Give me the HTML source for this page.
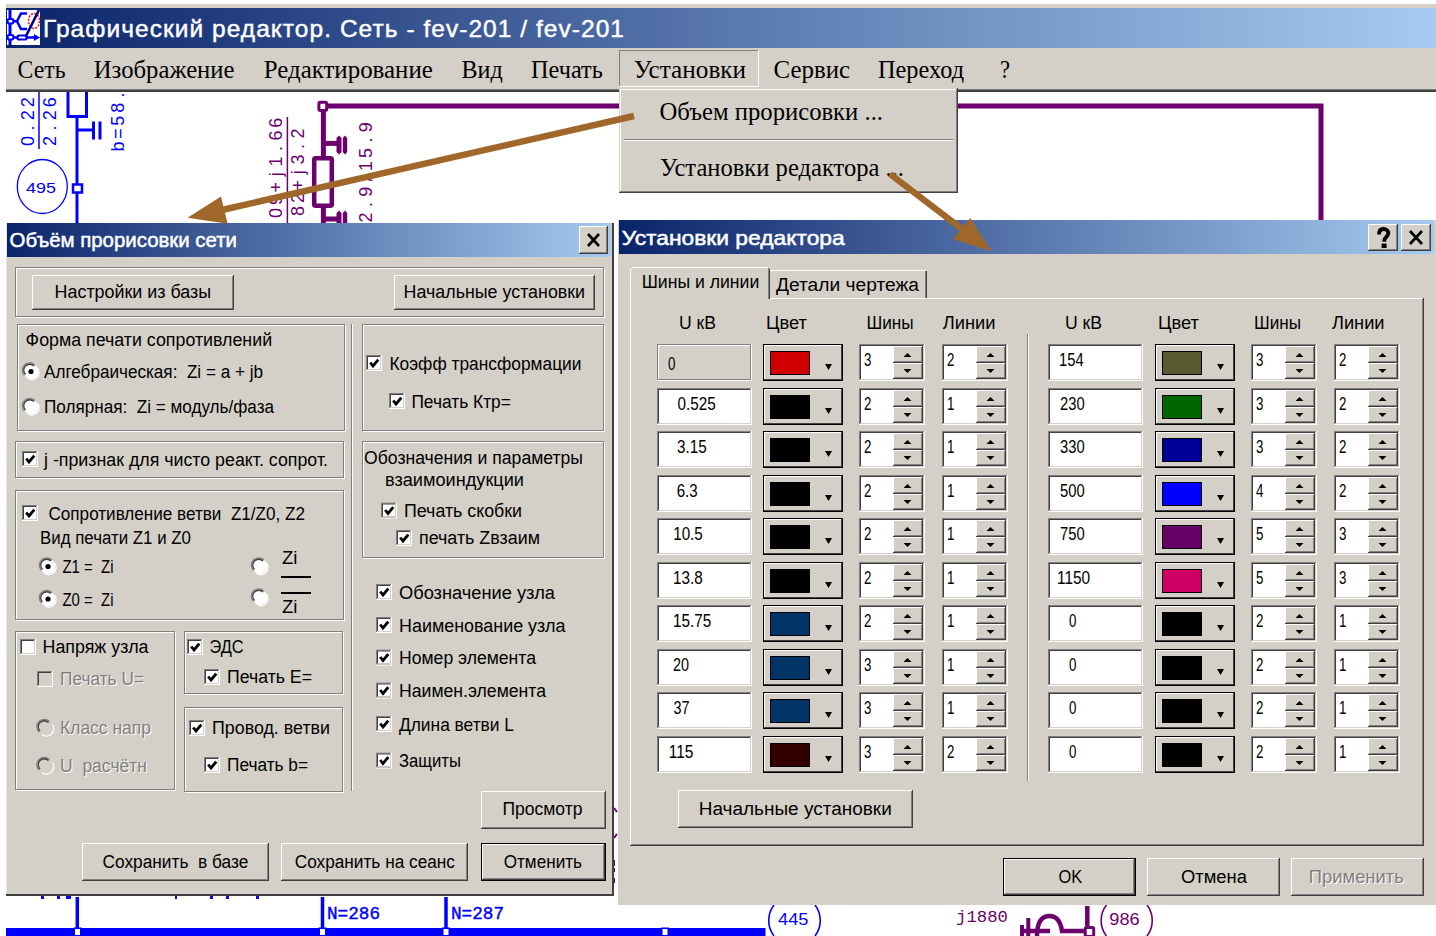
<!DOCTYPE html>
<html><head><meta charset="utf-8"><title>Графический редактор</title>
<style>html,body{margin:0;padding:0;background:#fff;overflow:hidden}svg{display:block}</style>
</head><body>
<svg width="1436" height="936" viewBox="0 0 1436 936">
<rect x="0" y="0" width="1436" height="936" fill="#fff"/>
<rect x="6" y="4" width="1430" height="4" fill="#d4d0c8"/>
<defs><linearGradient id="gmain" x1="0" x2="1" y1="0" y2="0"><stop offset="0" stop-color="#0a246a"/><stop offset="1" stop-color="#a6caf0"/></linearGradient></defs>
<rect x="6" y="8" width="1430" height="40" fill="url(#gmain)"/>
<rect x="7" y="10" width="33" height="35" fill="#fff"/>
<g stroke="#0000ff" fill="none" stroke-width="3"><path d="M10 10V45"/></g>
<g stroke="#0000ff" fill="#fff" stroke-width="2.2"><rect x="7.5" y="19" width="6" height="4.5" rx="2"/><rect x="7.5" y="35" width="6" height="4.5" rx="2"/><rect x="17.5" y="35.5" width="9" height="4" rx="1.5"/></g>
<g stroke="#0000ff" fill="none" stroke-width="2.5"><path d="M14 21.3H17M27 13.5H21L17 21.3L21 29H27"/><path d="M14 37.5H17M27 37.5H34"/></g>
<path d="M34 34L40 37.5L34 41Z" fill="#0000ff"/>
<ellipse cx="34" cy="21" rx="5.5" ry="7.5" fill="none" stroke="#ff2020" stroke-width="1.6" stroke-dasharray="2.2 1.2"/>
<path d="M26 36L39 10" stroke="#000080" stroke-width="2.6"/>
<text x="43" y="36.5" font-family="Liberation Sans" font-size="24.5" fill="#fff" stroke="#fff" stroke-width="0.45" textLength="581" lengthAdjust="spacing">Графический редактор. Сеть - fev-201 / fev-201</text>
<rect x="6" y="48" width="1430" height="41" fill="#d4d0c8"/>
<rect x="6" y="89" width="1430" height="1" fill="#808080"/>
<rect x="6" y="90" width="1430" height="2" fill="#404040"/>
<rect x="619" y="50" width="140" height="37" fill="#ffffff"/>
<rect x="619" y="50" width="139" height="36" fill="#808080"/>
<rect x="620" y="51" width="138" height="35" fill="#d4d0c8"/>
<text x="17.5" y="77.5" font-family="Liberation Serif" font-size="25" fill="#000" textLength="48" lengthAdjust="spacingAndGlyphs" xml:space="preserve">Сеть</text>
<text x="93.75" y="77.5" font-family="Liberation Serif" font-size="25" fill="#000" textLength="140.75" lengthAdjust="spacingAndGlyphs" xml:space="preserve">Изображение</text>
<text x="263.75" y="77.5" font-family="Liberation Serif" font-size="25" fill="#000" textLength="169" lengthAdjust="spacingAndGlyphs" xml:space="preserve">Редактирование</text>
<text x="461.5" y="77.5" font-family="Liberation Serif" font-size="25" fill="#000" textLength="41.25" lengthAdjust="spacingAndGlyphs" xml:space="preserve">Вид</text>
<text x="531" y="77.5" font-family="Liberation Serif" font-size="25" fill="#000" textLength="71.75" lengthAdjust="spacingAndGlyphs" xml:space="preserve">Печать</text>
<text x="633.8" y="77.5" font-family="Liberation Serif" font-size="25" fill="#000" textLength="112.2" lengthAdjust="spacingAndGlyphs" xml:space="preserve">Установки</text>
<text x="773.5" y="77.5" font-family="Liberation Serif" font-size="25" fill="#000" textLength="76.5" lengthAdjust="spacingAndGlyphs" xml:space="preserve">Сервис</text>
<text x="878" y="77.5" font-family="Liberation Serif" font-size="25" fill="#000" textLength="86" lengthAdjust="spacingAndGlyphs" xml:space="preserve">Переход</text>
<text x="1000" y="77.5" font-family="Liberation Serif" font-size="25" fill="#000" textLength="10" lengthAdjust="spacingAndGlyphs" xml:space="preserve">?</text>
<defs><clipPath id="cv"><rect x="6" y="92" width="1430" height="844"/></clipPath></defs>
<g clip-path="url(#cv)">
<g fill="none" stroke="#0000ff" stroke-width="3"><path d="M68 80V116.5H86.5V80"/><path d="M77 117V224"/><path d="M77 130H92"/><path d="M93.5 121.5V139.5M100 121.5V139.5"/></g>
<rect x="73" y="184.5" width="9" height="8" fill="#fff" stroke="#0000ff" stroke-width="2.5"/>
<ellipse cx="42.3" cy="186.5" rx="25" ry="27" fill="none" stroke="#0000ff" stroke-width="1.3"/>
<text x="26" y="193" font-family="Liberation Sans" font-size="15.5" fill="#0000ff" textLength="30" lengthAdjust="spacingAndGlyphs" xml:space="preserve">495</text>
<path d="M39 92V149" stroke="#0000ff" stroke-width="1.5"/>
<text transform="translate(34,147.5) rotate(-90)" x="6.5 19.4 32.2 45.2 58.1 71.0" text-anchor="middle" font-family="Liberation Sans" font-size="18" fill="#0000ff">0.22.2</text>
<text transform="translate(55.5,147.5) rotate(-90)" x="6.5 19.4 32.2 45.2 58.1 71.0" text-anchor="middle" font-family="Liberation Sans" font-size="18" fill="#0000ff">2.26.2</text>
<text transform="translate(124,153) rotate(-90)" x="6.5 19.4 32.2 45.2 58.1" text-anchor="middle" font-family="Liberation Sans" font-size="18" fill="#0000ff">b=58.</text>
<g fill="none" stroke="#6c006c" stroke-width="5"><path d="M327 106H1321V224"/><path d="M323.4 111V158"/><path d="M323 143.4H339"/><path d="M323 219H339"/><path d="M323.4 206V224"/></g>
<rect x="314.2" y="158.2" width="17.6" height="47.6" rx="1.5" fill="none" stroke="#6c006c" stroke-width="4.5"/>
<path d="M339 135.5l2.5 2.5v14l-2.5 2.5l-2.5-2.5v-14zM345 135.5l2.2 2.5v14l-2.2 2.5l-2.2-2.5v-14z" fill="#6c006c"/>
<path d="M339 210.5l2.5 2.5v14h-5v-14zM345 210.5l2.2 2.5v14h-4.4v-14z" fill="#6c006c"/>
<rect x="318.9" y="102.2" width="7.8" height="8.3" rx="1.5" fill="#fff" stroke="#6c006c" stroke-width="3"/>
<path d="M287.4 117V224" stroke="#6c006c" stroke-width="1.5"/>
<text transform="translate(282,219.5) rotate(-90)" x="6.5 19.4 32.2 45.2 58.1 71.0 83.9 96.8" text-anchor="middle" font-family="Liberation Sans" font-size="18" fill="#6c006c">09+j1.66</text>
<text transform="translate(303.5,217.5) rotate(-90)" x="6.5 19.4 32.2 45.2 58.1 71.0 83.9" text-anchor="middle" font-family="Liberation Sans" font-size="18" fill="#6c006c">82+j3.2</text>
<text transform="translate(372,224) rotate(-90)" x="6.5 19.4 32.2 45.2 58.1 71.0 83.9 96.8" text-anchor="middle" font-family="Liberation Sans" font-size="18" fill="#6c006c">2.9/15.9</text>
</g>
<rect x="6" y="928" width="759.5" height="8" fill="#0000ff"/>
<path d="M77.3 897V928" stroke="#0000ff" stroke-width="3.5"/>
<path d="M322.5 897V928" stroke="#0000ff" stroke-width="3.5"/>
<path d="M446 897V928" stroke="#0000ff" stroke-width="3.5"/>
<rect x="74.2" y="928.3" width="6.6" height="7.5" fill="#fff" stroke="#0000ff" stroke-width="1.6"/>
<rect x="319.2" y="928.3" width="6.6" height="7.5" fill="#fff" stroke="#0000ff" stroke-width="1.6"/>
<rect x="442.7" y="928.3" width="6.6" height="7.5" fill="#fff" stroke="#0000ff" stroke-width="1.6"/>
<rect x="661.7" y="928.3" width="6.6" height="7.5" fill="#fff" stroke="#0000ff" stroke-width="1.6"/>
<rect x="41" y="896" width="3" height="3" fill="#0000ff"/>
<rect x="57" y="896" width="3" height="3" fill="#0000ff"/>
<rect x="66" y="896" width="5" height="3" fill="#0000ff"/>
<rect x="175" y="896" width="2" height="3" fill="#0000ff"/>
<rect x="210" y="896" width="3" height="3" fill="#0000ff"/>
<rect x="226" y="896" width="3" height="3" fill="#0000ff"/>
<rect x="256" y="896" width="3" height="3" fill="#0000ff"/>
<text x="327" y="919" font-family="Liberation Mono" font-size="17.5" fill="#0000ff" textLength="53" lengthAdjust="spacingAndGlyphs" stroke="#0000ff" stroke-width="0.4" xml:space="preserve">N=286</text>
<text x="451" y="919" font-family="Liberation Mono" font-size="17.5" fill="#0000ff" textLength="53" lengthAdjust="spacingAndGlyphs" stroke="#0000ff" stroke-width="0.4" xml:space="preserve">N=287</text>
<path d="M774 905C767 914 767 927 774 936M815 905C822 914 822 927 815 936" stroke="#0000ff" stroke-width="1.6" fill="none"/>
<text x="778" y="924.8" font-family="Liberation Sans" font-size="16.5" fill="#0000ff" textLength="30.5" lengthAdjust="spacingAndGlyphs" xml:space="preserve">445</text>
<text x="956" y="922" font-family="Liberation Mono" font-size="17" fill="#6c006c" textLength="52" lengthAdjust="spacingAndGlyphs" xml:space="preserve">j1880</text>
<path d="M1087.3 906V926M1084 931H1062C1060 918 1054 916 1049.5 916C1042 916 1037 922 1037 936M1022 931H1050" stroke="#6c006c" stroke-width="4.5" fill="none"/>
<path d="M1028.3 918V936M1022 925V936" stroke="#6c006c" stroke-width="4" fill="none"/>
<rect x="1085.2" y="927.5" width="8.5" height="9" rx="1.5" fill="#fff" stroke="#6c006c" stroke-width="3"/>
<path d="M1106.4 905C1099.4 914 1099.4 927 1106.4 936M1147 905C1154 914 1154 927 1147 936" stroke="#6c006c" stroke-width="1.6" fill="none"/>
<text x="1109.3" y="925" font-family="Liberation Sans" font-size="16.5" fill="#6c006c" textLength="30.3" lengthAdjust="spacingAndGlyphs" xml:space="preserve">986</text>
<path d="M614 808l3 4M614 838l3-4M614 860v6M614 868v4M614 878v5" stroke="#6c006c" stroke-width="2"/>
<rect x="619" y="88" width="339" height="105" fill="#404040"/>
<rect x="619" y="88" width="338" height="104" fill="#d4d0c8"/>
<rect x="620" y="89" width="337" height="103" fill="#808080"/>
<rect x="620" y="89" width="336" height="102" fill="#ffffff"/>
<rect x="621" y="90" width="335" height="101" fill="#d4d0c8"/>
<rect x="624" y="139" width="329" height="1" fill="#808080"/>
<rect x="624" y="140" width="329" height="1" fill="#ffffff"/>
<text x="659.5" y="119.6" font-family="Liberation Serif" font-size="25" fill="#000" textLength="223.5" lengthAdjust="spacingAndGlyphs" xml:space="preserve">Объем прорисовки ...</text>
<text x="660" y="176" font-family="Liberation Serif" font-size="25" fill="#000" textLength="244" lengthAdjust="spacingAndGlyphs" xml:space="preserve">Установки редактора ...</text>
<rect x="6" y="223" width="608" height="673" fill="#404040"/>
<rect x="6" y="223" width="606" height="671" fill="#d4d0c8"/>
<rect x="6" y="223" width="1" height="671" fill="#e8e4dc"/>
<defs><linearGradient id="gd1" x1="0" x2="1" y1="0" y2="0"><stop offset="0" stop-color="#0a246a"/><stop offset="1" stop-color="#a6caf0"/></linearGradient></defs>
<rect x="7" y="223" width="604" height="34" fill="url(#gd1)"/>
<text x="9.5" y="247.4" font-family="Liberation Sans" font-size="21" fill="#fff" textLength="227.5" lengthAdjust="spacingAndGlyphs" stroke="#fff" stroke-width="0.5" xml:space="preserve">Объём прорисовки сети</text>
<rect x="579" y="226" width="29" height="28" fill="#404040"/>
<rect x="579" y="226" width="28" height="27" fill="#ffffff"/>
<rect x="580" y="227" width="27" height="26" fill="#808080"/>
<rect x="580" y="227" width="26" height="25" fill="#d4d0c8"/>
<path d="M588 234L599 246M599 234L588 246" stroke="#000" stroke-width="2.6"/>
<rect x="16" y="268" width="589" height="50" fill="#ffffff"/>
<rect x="17" y="269" width="587" height="48" fill="#d4d0c8"/>
<rect x="15" y="267" width="589" height="1" fill="#808080"/>
<rect x="15" y="267" width="1" height="50" fill="#808080"/>
<rect x="603" y="267" width="1" height="50" fill="#808080"/>
<rect x="15" y="316" width="589" height="1" fill="#808080"/>
<rect x="32" y="275" width="202" height="35" fill="#404040"/>
<rect x="32" y="275" width="201" height="34" fill="#ffffff"/>
<rect x="33" y="276" width="200" height="33" fill="#808080"/>
<rect x="33" y="276" width="199" height="32" fill="#d4d0c8"/>
<text x="54.6" y="297.9" font-family="Liberation Sans" font-size="18" fill="#000" textLength="156.5" lengthAdjust="spacingAndGlyphs" xml:space="preserve">Настройки из базы</text>
<rect x="394" y="275" width="201" height="35" fill="#404040"/>
<rect x="394" y="275" width="200" height="34" fill="#ffffff"/>
<rect x="395" y="276" width="199" height="33" fill="#808080"/>
<rect x="395" y="276" width="198" height="32" fill="#d4d0c8"/>
<text x="403.6" y="297.9" font-family="Liberation Sans" font-size="18" fill="#000" textLength="181.5" lengthAdjust="spacingAndGlyphs" xml:space="preserve">Начальные установки</text>
<rect x="18" y="325" width="328" height="107" fill="#ffffff"/>
<rect x="19" y="326" width="326" height="105" fill="#d4d0c8"/>
<rect x="17" y="324" width="328" height="1" fill="#808080"/>
<rect x="17" y="324" width="1" height="107" fill="#808080"/>
<rect x="344" y="324" width="1" height="107" fill="#808080"/>
<rect x="17" y="430" width="328" height="1" fill="#808080"/>
<text x="25.6" y="346" font-family="Liberation Sans" font-size="18" fill="#000" textLength="246.5" lengthAdjust="spacingAndGlyphs" xml:space="preserve">Форма печати сопротивлений</text>
<circle cx="31" cy="371.5" r="7.5" fill="#fff"/>
<path d="M24.5 375.5 A7 7 0 0 1 35 365.0" stroke="#808080" stroke-width="1.3" fill="none"/>
<path d="M25.5 374.5 A6 6 0 0 1 34 366.0" stroke="#404040" stroke-width="1.3" fill="none"/>
<path d="M37.8 368.0 A7.4 7.4 0 0 1 27.5 378.3" stroke="#fff" stroke-width="1.3" fill="none"/>
<circle cx="31" cy="371.5" r="2.6" fill="#000"/>
<text x="44" y="377.8" font-family="Liberation Sans" font-size="18" fill="#000" textLength="219" lengthAdjust="spacingAndGlyphs" xml:space="preserve">Алгебраическая:  Zi = a + jb</text>
<circle cx="31" cy="407" r="7.5" fill="#fff"/>
<path d="M24.5 411 A7 7 0 0 1 35 400.5" stroke="#808080" stroke-width="1.3" fill="none"/>
<path d="M25.5 410 A6 6 0 0 1 34 401.5" stroke="#404040" stroke-width="1.3" fill="none"/>
<path d="M37.8 403.5 A7.4 7.4 0 0 1 27.5 413.8" stroke="#fff" stroke-width="1.3" fill="none"/>
<text x="44" y="413" font-family="Liberation Sans" font-size="18" fill="#000" textLength="230" lengthAdjust="spacingAndGlyphs" xml:space="preserve">Полярная:  Zi = модуль/фаза</text>
<rect x="351" y="324" width="1" height="467" fill="#808080"/>
<rect x="352" y="324" width="1" height="467" fill="#ffffff"/>
<rect x="363" y="325" width="242" height="107" fill="#ffffff"/>
<rect x="364" y="326" width="240" height="105" fill="#d4d0c8"/>
<rect x="362" y="324" width="242" height="1" fill="#808080"/>
<rect x="362" y="324" width="1" height="107" fill="#808080"/>
<rect x="603" y="324" width="1" height="107" fill="#808080"/>
<rect x="362" y="430" width="242" height="1" fill="#808080"/>
<rect x="366" y="355" width="16" height="16" fill="#ffffff"/>
<rect x="366" y="355" width="15" height="15" fill="#808080"/>
<rect x="367" y="356" width="14" height="14" fill="#d4d0c8"/>
<rect x="367" y="356" width="13" height="13" fill="#404040"/>
<rect x="368" y="357" width="12" height="12" fill="#fff"/>
<path d="M370.2 362.5L373 366L378.3 359.6" stroke="#000" stroke-width="2.8" fill="none" stroke-linecap="butt" stroke-linejoin="miter"/>
<text x="389.5" y="369.8" font-family="Liberation Sans" font-size="18" fill="#000" textLength="192" lengthAdjust="spacingAndGlyphs" xml:space="preserve">Коэфф трансформации</text>
<rect x="389" y="393" width="16" height="16" fill="#ffffff"/>
<rect x="389" y="393" width="15" height="15" fill="#808080"/>
<rect x="390" y="394" width="14" height="14" fill="#d4d0c8"/>
<rect x="390" y="394" width="13" height="13" fill="#404040"/>
<rect x="391" y="395" width="12" height="12" fill="#fff"/>
<path d="M393.2 400.5L396 404L401.3 397.6" stroke="#000" stroke-width="2.8" fill="none" stroke-linecap="butt" stroke-linejoin="miter"/>
<text x="411.4" y="407.5" font-family="Liberation Sans" font-size="18" fill="#000" textLength="99.5" lengthAdjust="spacingAndGlyphs" xml:space="preserve">Печать Ктр=</text>
<rect x="16" y="442" width="329" height="37" fill="#ffffff"/>
<rect x="17" y="443" width="327" height="35" fill="#d4d0c8"/>
<rect x="15" y="441" width="329" height="1" fill="#808080"/>
<rect x="15" y="441" width="1" height="37" fill="#808080"/>
<rect x="343" y="441" width="1" height="37" fill="#808080"/>
<rect x="15" y="477" width="329" height="1" fill="#808080"/>
<rect x="22" y="451" width="16" height="16" fill="#ffffff"/>
<rect x="22" y="451" width="15" height="15" fill="#808080"/>
<rect x="23" y="452" width="14" height="14" fill="#d4d0c8"/>
<rect x="23" y="452" width="13" height="13" fill="#404040"/>
<rect x="24" y="453" width="12" height="12" fill="#fff"/>
<path d="M26.2 458.5L29 462L34.3 455.6" stroke="#000" stroke-width="2.8" fill="none" stroke-linecap="butt" stroke-linejoin="miter"/>
<text x="44" y="465.5" font-family="Liberation Sans" font-size="18" fill="#000" textLength="284" lengthAdjust="spacingAndGlyphs" xml:space="preserve">j -признак для чисто реакт. сопрот.</text>
<rect x="16" y="491" width="329" height="130" fill="#ffffff"/>
<rect x="17" y="492" width="327" height="128" fill="#d4d0c8"/>
<rect x="15" y="490" width="329" height="1" fill="#808080"/>
<rect x="15" y="490" width="1" height="130" fill="#808080"/>
<rect x="343" y="490" width="1" height="130" fill="#808080"/>
<rect x="15" y="619" width="329" height="1" fill="#808080"/>
<rect x="22" y="505" width="16" height="16" fill="#ffffff"/>
<rect x="22" y="505" width="15" height="15" fill="#808080"/>
<rect x="23" y="506" width="14" height="14" fill="#d4d0c8"/>
<rect x="23" y="506" width="13" height="13" fill="#404040"/>
<rect x="24" y="507" width="12" height="12" fill="#fff"/>
<path d="M26.2 512.5L29 516L34.3 509.6" stroke="#000" stroke-width="2.8" fill="none" stroke-linecap="butt" stroke-linejoin="miter"/>
<text x="48.5" y="519.5" font-family="Liberation Sans" font-size="18" fill="#000" textLength="256.5" lengthAdjust="spacingAndGlyphs" xml:space="preserve">Сопротивление ветви  Z1/Z0, Z2</text>
<text x="40" y="544" font-family="Liberation Sans" font-size="18" fill="#000" textLength="151" lengthAdjust="spacingAndGlyphs" xml:space="preserve">Вид печати Z1 и Z0</text>
<circle cx="48" cy="566.5" r="7.5" fill="#fff"/>
<path d="M41.5 570.5 A7 7 0 0 1 52 560.0" stroke="#808080" stroke-width="1.3" fill="none"/>
<path d="M42.5 569.5 A6 6 0 0 1 51 561.0" stroke="#404040" stroke-width="1.3" fill="none"/>
<path d="M54.8 563.0 A7.4 7.4 0 0 1 44.5 573.3" stroke="#fff" stroke-width="1.3" fill="none"/>
<circle cx="48" cy="566.5" r="2.6" fill="#000"/>
<text x="62.5" y="572.75" font-family="Liberation Sans" font-size="18" fill="#000" textLength="51" lengthAdjust="spacingAndGlyphs" xml:space="preserve">Z1 =  Zi</text>
<circle cx="48" cy="599" r="7.5" fill="#fff"/>
<path d="M41.5 603 A7 7 0 0 1 52 592.5" stroke="#808080" stroke-width="1.3" fill="none"/>
<path d="M42.5 602 A6 6 0 0 1 51 593.5" stroke="#404040" stroke-width="1.3" fill="none"/>
<path d="M54.8 595.5 A7.4 7.4 0 0 1 44.5 605.8" stroke="#fff" stroke-width="1.3" fill="none"/>
<circle cx="48" cy="599" r="2.6" fill="#000"/>
<text x="62.5" y="606" font-family="Liberation Sans" font-size="18" fill="#000" textLength="51" lengthAdjust="spacingAndGlyphs" xml:space="preserve">Z0 =  Zi</text>
<circle cx="260" cy="566.5" r="7.5" fill="#fff"/>
<path d="M253.5 570.5 A7 7 0 0 1 264 560.0" stroke="#808080" stroke-width="1.3" fill="none"/>
<path d="M254.5 569.5 A6 6 0 0 1 263 561.0" stroke="#404040" stroke-width="1.3" fill="none"/>
<path d="M266.8 563.0 A7.4 7.4 0 0 1 256.5 573.3" stroke="#fff" stroke-width="1.3" fill="none"/>
<circle cx="260" cy="597.5" r="7.5" fill="#fff"/>
<path d="M253.5 601.5 A7 7 0 0 1 264 591.0" stroke="#808080" stroke-width="1.3" fill="none"/>
<path d="M254.5 600.5 A6 6 0 0 1 263 592.0" stroke="#404040" stroke-width="1.3" fill="none"/>
<path d="M266.8 594.0 A7.4 7.4 0 0 1 256.5 604.3" stroke="#fff" stroke-width="1.3" fill="none"/>
<text x="282" y="564" font-family="Liberation Sans" font-size="18" fill="#000" textLength="15.5" lengthAdjust="spacingAndGlyphs" xml:space="preserve">Zi</text>
<rect x="281" y="576" width="30" height="2" fill="#000"/>
<rect x="281" y="592" width="30" height="2" fill="#000"/>
<text x="282" y="613" font-family="Liberation Sans" font-size="18" fill="#000" textLength="15.5" lengthAdjust="spacingAndGlyphs" xml:space="preserve">Zi</text>
<rect x="16" y="632" width="160" height="159" fill="#ffffff"/>
<rect x="17" y="633" width="158" height="157" fill="#d4d0c8"/>
<rect x="15" y="631" width="160" height="1" fill="#808080"/>
<rect x="15" y="631" width="1" height="159" fill="#808080"/>
<rect x="174" y="631" width="1" height="159" fill="#808080"/>
<rect x="15" y="789" width="160" height="1" fill="#808080"/>
<rect x="20" y="639" width="16" height="16" fill="#ffffff"/>
<rect x="20" y="639" width="15" height="15" fill="#808080"/>
<rect x="21" y="640" width="14" height="14" fill="#d4d0c8"/>
<rect x="21" y="640" width="13" height="13" fill="#404040"/>
<rect x="22" y="641" width="12" height="12" fill="#fff"/>
<text x="42.5" y="653" font-family="Liberation Sans" font-size="18" fill="#000" textLength="106" lengthAdjust="spacingAndGlyphs" xml:space="preserve">Напряж узла</text>
<rect x="37" y="671" width="16" height="16" fill="#ffffff"/>
<rect x="37" y="671" width="15" height="15" fill="#808080"/>
<rect x="38" y="672" width="14" height="14" fill="#d4d0c8"/>
<rect x="38" y="672" width="13" height="13" fill="#404040"/>
<rect x="39" y="673" width="12" height="12" fill="#d4d0c8"/>
<text x="61" y="686" font-family="Liberation Sans" font-size="18" fill="#ffffff" textLength="84" lengthAdjust="spacingAndGlyphs" xml:space="preserve">Печать U=</text>
<text x="60" y="685" font-family="Liberation Sans" font-size="18" fill="#808080" textLength="84" lengthAdjust="spacingAndGlyphs" xml:space="preserve">Печать U=</text>
<circle cx="45.5" cy="728" r="7.5" fill="#d4d0c8"/>
<path d="M39.0 732 A7 7 0 0 1 49.5 721.5" stroke="#808080" stroke-width="1.3" fill="none"/>
<path d="M40.0 731 A6 6 0 0 1 48.5 722.5" stroke="#404040" stroke-width="1.3" fill="none"/>
<path d="M52.3 724.5 A7.4 7.4 0 0 1 42.0 734.8" stroke="#fff" stroke-width="1.3" fill="none"/>
<text x="61" y="735" font-family="Liberation Sans" font-size="18" fill="#ffffff" textLength="91" lengthAdjust="spacingAndGlyphs" xml:space="preserve">Класс напр</text>
<text x="60" y="734" font-family="Liberation Sans" font-size="18" fill="#808080" textLength="91" lengthAdjust="spacingAndGlyphs" xml:space="preserve">Класс напр</text>
<circle cx="45.5" cy="766" r="7.5" fill="#d4d0c8"/>
<path d="M39.0 770 A7 7 0 0 1 49.5 759.5" stroke="#808080" stroke-width="1.3" fill="none"/>
<path d="M40.0 769 A6 6 0 0 1 48.5 760.5" stroke="#404040" stroke-width="1.3" fill="none"/>
<path d="M52.3 762.5 A7.4 7.4 0 0 1 42.0 772.8" stroke="#fff" stroke-width="1.3" fill="none"/>
<text x="61" y="773" font-family="Liberation Sans" font-size="18" fill="#ffffff" textLength="87" lengthAdjust="spacingAndGlyphs" xml:space="preserve">U  расчётн</text>
<text x="60" y="772" font-family="Liberation Sans" font-size="18" fill="#808080" textLength="87" lengthAdjust="spacingAndGlyphs" xml:space="preserve">U  расчётн</text>
<rect x="185" y="632" width="159" height="63" fill="#ffffff"/>
<rect x="186" y="633" width="157" height="61" fill="#d4d0c8"/>
<rect x="184" y="631" width="159" height="1" fill="#808080"/>
<rect x="184" y="631" width="1" height="63" fill="#808080"/>
<rect x="342" y="631" width="1" height="63" fill="#808080"/>
<rect x="184" y="693" width="159" height="1" fill="#808080"/>
<rect x="187" y="639" width="16" height="16" fill="#ffffff"/>
<rect x="187" y="639" width="15" height="15" fill="#808080"/>
<rect x="188" y="640" width="14" height="14" fill="#d4d0c8"/>
<rect x="188" y="640" width="13" height="13" fill="#404040"/>
<rect x="189" y="641" width="12" height="12" fill="#fff"/>
<path d="M191.2 646.5L194 650L199.3 643.6" stroke="#000" stroke-width="2.8" fill="none" stroke-linecap="butt" stroke-linejoin="miter"/>
<text x="209.5" y="653" font-family="Liberation Sans" font-size="18" fill="#000" textLength="34" lengthAdjust="spacingAndGlyphs" xml:space="preserve">ЭДС</text>
<rect x="204" y="669" width="16" height="16" fill="#ffffff"/>
<rect x="204" y="669" width="15" height="15" fill="#808080"/>
<rect x="205" y="670" width="14" height="14" fill="#d4d0c8"/>
<rect x="205" y="670" width="13" height="13" fill="#404040"/>
<rect x="206" y="671" width="12" height="12" fill="#fff"/>
<path d="M208.2 676.5L211 680L216.3 673.6" stroke="#000" stroke-width="2.8" fill="none" stroke-linecap="butt" stroke-linejoin="miter"/>
<text x="227" y="683" font-family="Liberation Sans" font-size="18" fill="#000" textLength="85" lengthAdjust="spacingAndGlyphs" xml:space="preserve">Печать E=</text>
<rect x="185" y="708" width="159" height="85" fill="#ffffff"/>
<rect x="186" y="709" width="157" height="83" fill="#d4d0c8"/>
<rect x="184" y="707" width="159" height="1" fill="#808080"/>
<rect x="184" y="707" width="1" height="85" fill="#808080"/>
<rect x="342" y="707" width="1" height="85" fill="#808080"/>
<rect x="184" y="791" width="159" height="1" fill="#808080"/>
<rect x="189" y="720" width="16" height="16" fill="#ffffff"/>
<rect x="189" y="720" width="15" height="15" fill="#808080"/>
<rect x="190" y="721" width="14" height="14" fill="#d4d0c8"/>
<rect x="190" y="721" width="13" height="13" fill="#404040"/>
<rect x="191" y="722" width="12" height="12" fill="#fff"/>
<path d="M193.2 727.5L196 731L201.3 724.6" stroke="#000" stroke-width="2.8" fill="none" stroke-linecap="butt" stroke-linejoin="miter"/>
<text x="212" y="734" font-family="Liberation Sans" font-size="18" fill="#000" textLength="118" lengthAdjust="spacingAndGlyphs" xml:space="preserve">Провод. ветви</text>
<rect x="204" y="757" width="16" height="16" fill="#ffffff"/>
<rect x="204" y="757" width="15" height="15" fill="#808080"/>
<rect x="205" y="758" width="14" height="14" fill="#d4d0c8"/>
<rect x="205" y="758" width="13" height="13" fill="#404040"/>
<rect x="206" y="759" width="12" height="12" fill="#fff"/>
<path d="M208.2 764.5L211 768L216.3 761.6" stroke="#000" stroke-width="2.8" fill="none" stroke-linecap="butt" stroke-linejoin="miter"/>
<text x="227" y="771" font-family="Liberation Sans" font-size="18" fill="#000" textLength="81" lengthAdjust="spacingAndGlyphs" xml:space="preserve">Печать b=</text>
<rect x="363" y="442" width="242" height="117" fill="#ffffff"/>
<rect x="364" y="443" width="240" height="115" fill="#d4d0c8"/>
<rect x="362" y="441" width="242" height="1" fill="#808080"/>
<rect x="362" y="441" width="1" height="117" fill="#808080"/>
<rect x="603" y="441" width="1" height="117" fill="#808080"/>
<rect x="362" y="557" width="242" height="1" fill="#808080"/>
<text x="364" y="464" font-family="Liberation Sans" font-size="18" fill="#000" textLength="219" lengthAdjust="spacingAndGlyphs" xml:space="preserve">Обозначения и параметры</text>
<text x="385" y="485.5" font-family="Liberation Sans" font-size="18" fill="#000" textLength="139" lengthAdjust="spacingAndGlyphs" xml:space="preserve">взаимоиндукции</text>
<rect x="381" y="502.5" width="16" height="16" fill="#ffffff"/>
<rect x="381" y="502.5" width="15" height="15" fill="#808080"/>
<rect x="382" y="503.5" width="14" height="14" fill="#d4d0c8"/>
<rect x="382" y="503.5" width="13" height="13" fill="#404040"/>
<rect x="383" y="504.5" width="12" height="12" fill="#fff"/>
<path d="M385.2 510.0L388 513.5L393.3 507.1" stroke="#000" stroke-width="2.8" fill="none" stroke-linecap="butt" stroke-linejoin="miter"/>
<text x="404" y="516.5" font-family="Liberation Sans" font-size="18" fill="#000" textLength="118" lengthAdjust="spacingAndGlyphs" xml:space="preserve">Печать скобки</text>
<rect x="396" y="530" width="16" height="16" fill="#ffffff"/>
<rect x="396" y="530" width="15" height="15" fill="#808080"/>
<rect x="397" y="531" width="14" height="14" fill="#d4d0c8"/>
<rect x="397" y="531" width="13" height="13" fill="#404040"/>
<rect x="398" y="532" width="12" height="12" fill="#fff"/>
<path d="M400.2 537.5L403 541L408.3 534.6" stroke="#000" stroke-width="2.8" fill="none" stroke-linecap="butt" stroke-linejoin="miter"/>
<text x="419" y="544" font-family="Liberation Sans" font-size="18" fill="#000" textLength="121" lengthAdjust="spacingAndGlyphs" xml:space="preserve">печать Zвзаим</text>
<rect x="376" y="584" width="16" height="16" fill="#ffffff"/>
<rect x="376" y="584" width="15" height="15" fill="#808080"/>
<rect x="377" y="585" width="14" height="14" fill="#d4d0c8"/>
<rect x="377" y="585" width="13" height="13" fill="#404040"/>
<rect x="378" y="586" width="12" height="12" fill="#fff"/>
<path d="M380.2 591.5L383 595L388.3 588.6" stroke="#000" stroke-width="2.8" fill="none" stroke-linecap="butt" stroke-linejoin="miter"/>
<text x="399" y="598.5" font-family="Liberation Sans" font-size="18" fill="#000" textLength="156" lengthAdjust="spacingAndGlyphs" xml:space="preserve">Обозначение узла</text>
<rect x="376" y="617" width="16" height="16" fill="#ffffff"/>
<rect x="376" y="617" width="15" height="15" fill="#808080"/>
<rect x="377" y="618" width="14" height="14" fill="#d4d0c8"/>
<rect x="377" y="618" width="13" height="13" fill="#404040"/>
<rect x="378" y="619" width="12" height="12" fill="#fff"/>
<path d="M380.2 624.5L383 628L388.3 621.6" stroke="#000" stroke-width="2.8" fill="none" stroke-linecap="butt" stroke-linejoin="miter"/>
<text x="399" y="631.5" font-family="Liberation Sans" font-size="18" fill="#000" textLength="166.5" lengthAdjust="spacingAndGlyphs" xml:space="preserve">Наименование узла</text>
<rect x="376" y="649.5" width="16" height="16" fill="#ffffff"/>
<rect x="376" y="649.5" width="15" height="15" fill="#808080"/>
<rect x="377" y="650.5" width="14" height="14" fill="#d4d0c8"/>
<rect x="377" y="650.5" width="13" height="13" fill="#404040"/>
<rect x="378" y="651.5" width="12" height="12" fill="#fff"/>
<path d="M380.2 657.0L383 660.5L388.3 654.1" stroke="#000" stroke-width="2.8" fill="none" stroke-linecap="butt" stroke-linejoin="miter"/>
<text x="399" y="664.0" font-family="Liberation Sans" font-size="18" fill="#000" textLength="137" lengthAdjust="spacingAndGlyphs" xml:space="preserve">Номер элемента</text>
<rect x="376" y="682.5" width="16" height="16" fill="#ffffff"/>
<rect x="376" y="682.5" width="15" height="15" fill="#808080"/>
<rect x="377" y="683.5" width="14" height="14" fill="#d4d0c8"/>
<rect x="377" y="683.5" width="13" height="13" fill="#404040"/>
<rect x="378" y="684.5" width="12" height="12" fill="#fff"/>
<path d="M380.2 690.0L383 693.5L388.3 687.1" stroke="#000" stroke-width="2.8" fill="none" stroke-linecap="butt" stroke-linejoin="miter"/>
<text x="399" y="697.0" font-family="Liberation Sans" font-size="18" fill="#000" textLength="147" lengthAdjust="spacingAndGlyphs" xml:space="preserve">Наимен.элемента</text>
<rect x="376" y="716" width="16" height="16" fill="#ffffff"/>
<rect x="376" y="716" width="15" height="15" fill="#808080"/>
<rect x="377" y="717" width="14" height="14" fill="#d4d0c8"/>
<rect x="377" y="717" width="13" height="13" fill="#404040"/>
<rect x="378" y="718" width="12" height="12" fill="#fff"/>
<path d="M380.2 723.5L383 727L388.3 720.6" stroke="#000" stroke-width="2.8" fill="none" stroke-linecap="butt" stroke-linejoin="miter"/>
<text x="399" y="730.5" font-family="Liberation Sans" font-size="18" fill="#000" textLength="115" lengthAdjust="spacingAndGlyphs" xml:space="preserve">Длина ветви L</text>
<rect x="376" y="752.5" width="16" height="16" fill="#ffffff"/>
<rect x="376" y="752.5" width="15" height="15" fill="#808080"/>
<rect x="377" y="753.5" width="14" height="14" fill="#d4d0c8"/>
<rect x="377" y="753.5" width="13" height="13" fill="#404040"/>
<rect x="378" y="754.5" width="12" height="12" fill="#fff"/>
<path d="M380.2 760.0L383 763.5L388.3 757.1" stroke="#000" stroke-width="2.8" fill="none" stroke-linecap="butt" stroke-linejoin="miter"/>
<text x="399" y="767.0" font-family="Liberation Sans" font-size="18" fill="#000" textLength="62" lengthAdjust="spacingAndGlyphs" xml:space="preserve">Защиты</text>
<rect x="481" y="791" width="125" height="38" fill="#404040"/>
<rect x="481" y="791" width="124" height="37" fill="#ffffff"/>
<rect x="482" y="792" width="123" height="36" fill="#808080"/>
<rect x="482" y="792" width="122" height="35" fill="#d4d0c8"/>
<text x="502.5" y="815" font-family="Liberation Sans" font-size="18" fill="#000" textLength="80" lengthAdjust="spacingAndGlyphs" xml:space="preserve">Просмотр</text>
<rect x="82" y="843" width="187" height="38" fill="#404040"/>
<rect x="82" y="843" width="186" height="37" fill="#ffffff"/>
<rect x="83" y="844" width="185" height="36" fill="#808080"/>
<rect x="83" y="844" width="184" height="35" fill="#d4d0c8"/>
<text x="102.5" y="867.5" font-family="Liberation Sans" font-size="18" fill="#000" textLength="145.75" lengthAdjust="spacingAndGlyphs" xml:space="preserve">Сохранить  в базе</text>
<rect x="281" y="843" width="187" height="38" fill="#404040"/>
<rect x="281" y="843" width="186" height="37" fill="#ffffff"/>
<rect x="282" y="844" width="185" height="36" fill="#808080"/>
<rect x="282" y="844" width="184" height="35" fill="#d4d0c8"/>
<text x="294.7" y="867.8" font-family="Liberation Sans" font-size="18" fill="#000" textLength="160.3" lengthAdjust="spacingAndGlyphs" xml:space="preserve">Сохранить на сеанс</text>
<rect x="481" y="843" width="125" height="38" fill="#000"/>
<rect x="482" y="844" width="123" height="36" fill="#404040"/>
<rect x="482" y="844" width="122" height="35" fill="#ffffff"/>
<rect x="483" y="845" width="121" height="34" fill="#808080"/>
<rect x="483" y="845" width="120" height="33" fill="#d4d0c8"/>
<text x="503.7" y="867.8" font-family="Liberation Sans" font-size="18" fill="#000" textLength="78.3" lengthAdjust="spacingAndGlyphs" xml:space="preserve">Отменить</text>
<rect x="618" y="220" width="818" height="685" fill="#d4d0c8"/>
<defs><linearGradient id="gd2" x1="0" x2="1" y1="0" y2="0"><stop offset="0" stop-color="#0a246a"/><stop offset="1" stop-color="#a6caf0"/></linearGradient></defs>
<rect x="619" y="220" width="815" height="34" fill="url(#gd2)"/>
<text x="621.7" y="245" font-family="Liberation Sans" font-size="21" fill="#fff" textLength="223" lengthAdjust="spacingAndGlyphs" stroke="#fff" stroke-width="0.5" xml:space="preserve">Установки редактора</text>
<rect x="1368" y="224" width="30" height="27" fill="#404040"/>
<rect x="1368" y="224" width="29" height="26" fill="#ffffff"/>
<rect x="1369" y="225" width="28" height="25" fill="#808080"/>
<rect x="1369" y="225" width="27" height="24" fill="#d4d0c8"/>
<path d="M1379 234.5C1379 230.5 1381 229 1383.5 229C1386.2 229 1388.3 230.8 1388.3 233.3C1388.3 236.3 1384.8 237.3 1384.3 240V241.8" stroke="#000" stroke-width="3.8" fill="none"/>
<rect x="1381.6" y="243.6" width="5" height="4.4" fill="#000"/>
<rect x="1401" y="224" width="30" height="27" fill="#404040"/>
<rect x="1401" y="224" width="29" height="26" fill="#ffffff"/>
<rect x="1402" y="225" width="28" height="25" fill="#808080"/>
<rect x="1402" y="225" width="27" height="24" fill="#d4d0c8"/>
<path d="M1410 231L1422 244M1422 231L1410 244" stroke="#000" stroke-width="2.6"/>
<rect x="630" y="298" width="794" height="548" fill="#404040"/>
<rect x="630" y="298" width="793" height="547" fill="#ffffff"/>
<rect x="631" y="299" width="792" height="546" fill="#808080"/>
<rect x="631" y="299" width="791" height="545" fill="#d4d0c8"/>
<rect x="770" y="270" width="157" height="28" fill="#d4d0c8"/>
<rect x="770" y="270" width="156" height="1" fill="#ffffff"/>
<rect x="925" y="271" width="1" height="27" fill="#808080"/>
<rect x="926" y="271" width="1" height="27" fill="#404040"/>
<text x="776" y="291" font-family="Liberation Sans" font-size="18" fill="#000" textLength="143" lengthAdjust="spacingAndGlyphs" xml:space="preserve">Детали чертежа</text>
<rect x="630" y="267" width="140" height="33" fill="#d4d0c8"/>
<rect x="632" y="267" width="136" height="1" fill="#ffffff"/>
<rect x="630" y="269" width="1" height="31" fill="#ffffff"/>
<rect x="631" y="268" width="1" height="1" fill="#ffffff"/>
<rect x="768" y="268" width="1" height="31" fill="#808080"/>
<rect x="769" y="269" width="1" height="30" fill="#404040"/>
<text x="641.7" y="288.3" font-family="Liberation Sans" font-size="18" fill="#000" textLength="117.6" lengthAdjust="spacingAndGlyphs" xml:space="preserve">Шины и линии</text>
<text x="679" y="329" font-family="Liberation Sans" font-size="18" fill="#000" textLength="37" lengthAdjust="spacingAndGlyphs" xml:space="preserve">U кВ</text>
<text x="766" y="329" font-family="Liberation Sans" font-size="18" fill="#000" textLength="41" lengthAdjust="spacingAndGlyphs" xml:space="preserve">Цвет</text>
<text x="866.4" y="329" font-family="Liberation Sans" font-size="18" fill="#000" textLength="47.2" lengthAdjust="spacingAndGlyphs" xml:space="preserve">Шины</text>
<text x="942.8" y="329" font-family="Liberation Sans" font-size="18" fill="#000" textLength="52.7" lengthAdjust="spacingAndGlyphs" xml:space="preserve">Линии</text>
<text x="1065" y="329" font-family="Liberation Sans" font-size="18" fill="#000" textLength="37" lengthAdjust="spacingAndGlyphs" xml:space="preserve">U кВ</text>
<text x="1158" y="329" font-family="Liberation Sans" font-size="18" fill="#000" textLength="41" lengthAdjust="spacingAndGlyphs" xml:space="preserve">Цвет</text>
<text x="1254" y="329" font-family="Liberation Sans" font-size="18" fill="#000" textLength="47" lengthAdjust="spacingAndGlyphs" xml:space="preserve">Шины</text>
<text x="1332" y="329" font-family="Liberation Sans" font-size="18" fill="#000" textLength="52.5" lengthAdjust="spacingAndGlyphs" xml:space="preserve">Линии</text>
<rect x="1027" y="334" width="1" height="447" fill="#808080"/>
<rect x="1028" y="334" width="1" height="447" fill="#ffffff"/>
<rect x="657" y="344" width="95" height="37" fill="#ffffff"/>
<rect x="657" y="344" width="94" height="36" fill="#808080"/>
<rect x="658" y="345" width="93" height="35" fill="#808080"/>
<rect x="658" y="345" width="92" height="34" fill="#ffffff"/>
<rect x="659" y="346" width="91" height="33" fill="#d4d0c8"/>
<text x="668" y="369.5" font-family="Liberation Sans" font-size="18" fill="#000" textLength="7.4" lengthAdjust="spacingAndGlyphs" xml:space="preserve">0</text>
<rect x="763" y="344" width="80" height="37" fill="#000"/>
<rect x="764" y="345" width="78" height="35" fill="#404040"/>
<rect x="764" y="345" width="77" height="34" fill="#ffffff"/>
<rect x="765" y="346" width="76" height="33" fill="#d4d0c8"/>
<rect x="770" y="351" width="40" height="24" fill="#000"/>
<rect x="771" y="352" width="38" height="22" fill="#d00000"/>
<path d="M825 364h7l-3.5 6z" fill="#000"/>
<rect x="859" y="344" width="66" height="37" fill="#ffffff"/>
<rect x="859" y="344" width="65" height="36" fill="#808080"/>
<rect x="860" y="345" width="64" height="35" fill="#d4d0c8"/>
<rect x="860" y="345" width="63" height="34" fill="#404040"/>
<rect x="861" y="346" width="62" height="33" fill="#fff"/>
<rect x="893" y="346" width="30" height="17" fill="#404040"/>
<rect x="893" y="346" width="29" height="16" fill="#ffffff"/>
<rect x="894" y="347" width="28" height="15" fill="#808080"/>
<rect x="894" y="347" width="27" height="14" fill="#d4d0c8"/>
<path d="M903.5 357.0h8l-4-4z" fill="#000"/>
<rect x="893" y="363" width="30" height="16" fill="#404040"/>
<rect x="893" y="363" width="29" height="15" fill="#ffffff"/>
<rect x="894" y="364" width="28" height="14" fill="#808080"/>
<rect x="894" y="364" width="27" height="13" fill="#d4d0c8"/>
<path d="M903.5 369.0h8l-4 4z" fill="#000"/>
<text x="864" y="365.5" font-family="Liberation Sans" font-size="18" fill="#000" textLength="7.4" lengthAdjust="spacingAndGlyphs" xml:space="preserve">3</text>
<rect x="942" y="344" width="66" height="37" fill="#ffffff"/>
<rect x="942" y="344" width="65" height="36" fill="#808080"/>
<rect x="943" y="345" width="64" height="35" fill="#d4d0c8"/>
<rect x="943" y="345" width="63" height="34" fill="#404040"/>
<rect x="944" y="346" width="62" height="33" fill="#fff"/>
<rect x="976" y="346" width="30" height="17" fill="#404040"/>
<rect x="976" y="346" width="29" height="16" fill="#ffffff"/>
<rect x="977" y="347" width="28" height="15" fill="#808080"/>
<rect x="977" y="347" width="27" height="14" fill="#d4d0c8"/>
<path d="M986.5 357.0h8l-4-4z" fill="#000"/>
<rect x="976" y="363" width="30" height="16" fill="#404040"/>
<rect x="976" y="363" width="29" height="15" fill="#ffffff"/>
<rect x="977" y="364" width="28" height="14" fill="#808080"/>
<rect x="977" y="364" width="27" height="13" fill="#d4d0c8"/>
<path d="M986.5 369.0h8l-4 4z" fill="#000"/>
<text x="947" y="365.5" font-family="Liberation Sans" font-size="18" fill="#000" textLength="7.4" lengthAdjust="spacingAndGlyphs" xml:space="preserve">2</text>
<rect x="1048" y="344" width="95" height="37" fill="#ffffff"/>
<rect x="1048" y="344" width="94" height="36" fill="#808080"/>
<rect x="1049" y="345" width="93" height="35" fill="#d4d0c8"/>
<rect x="1049" y="345" width="92" height="34" fill="#404040"/>
<rect x="1050" y="346" width="91" height="33" fill="#fff"/>
<text x="1059" y="365.5" font-family="Liberation Sans" font-size="18" fill="#000" textLength="24.6" lengthAdjust="spacingAndGlyphs" xml:space="preserve">154</text>
<rect x="1155" y="344" width="80" height="37" fill="#000"/>
<rect x="1156" y="345" width="78" height="35" fill="#404040"/>
<rect x="1156" y="345" width="77" height="34" fill="#ffffff"/>
<rect x="1157" y="346" width="76" height="33" fill="#d4d0c8"/>
<rect x="1162" y="351" width="40" height="24" fill="#000"/>
<rect x="1163" y="352" width="38" height="22" fill="#5a5a32"/>
<path d="M1217 364h7l-3.5 6z" fill="#000"/>
<rect x="1251" y="344" width="66" height="37" fill="#ffffff"/>
<rect x="1251" y="344" width="65" height="36" fill="#808080"/>
<rect x="1252" y="345" width="64" height="35" fill="#d4d0c8"/>
<rect x="1252" y="345" width="63" height="34" fill="#404040"/>
<rect x="1253" y="346" width="62" height="33" fill="#fff"/>
<rect x="1285" y="346" width="30" height="17" fill="#404040"/>
<rect x="1285" y="346" width="29" height="16" fill="#ffffff"/>
<rect x="1286" y="347" width="28" height="15" fill="#808080"/>
<rect x="1286" y="347" width="27" height="14" fill="#d4d0c8"/>
<path d="M1295.5 357.0h8l-4-4z" fill="#000"/>
<rect x="1285" y="363" width="30" height="16" fill="#404040"/>
<rect x="1285" y="363" width="29" height="15" fill="#ffffff"/>
<rect x="1286" y="364" width="28" height="14" fill="#808080"/>
<rect x="1286" y="364" width="27" height="13" fill="#d4d0c8"/>
<path d="M1295.5 369.0h8l-4 4z" fill="#000"/>
<text x="1256" y="365.5" font-family="Liberation Sans" font-size="18" fill="#000" textLength="7.4" lengthAdjust="spacingAndGlyphs" xml:space="preserve">3</text>
<rect x="1334" y="344" width="66" height="37" fill="#ffffff"/>
<rect x="1334" y="344" width="65" height="36" fill="#808080"/>
<rect x="1335" y="345" width="64" height="35" fill="#d4d0c8"/>
<rect x="1335" y="345" width="63" height="34" fill="#404040"/>
<rect x="1336" y="346" width="62" height="33" fill="#fff"/>
<rect x="1368" y="346" width="30" height="17" fill="#404040"/>
<rect x="1368" y="346" width="29" height="16" fill="#ffffff"/>
<rect x="1369" y="347" width="28" height="15" fill="#808080"/>
<rect x="1369" y="347" width="27" height="14" fill="#d4d0c8"/>
<path d="M1378.5 357.0h8l-4-4z" fill="#000"/>
<rect x="1368" y="363" width="30" height="16" fill="#404040"/>
<rect x="1368" y="363" width="29" height="15" fill="#ffffff"/>
<rect x="1369" y="364" width="28" height="14" fill="#808080"/>
<rect x="1369" y="364" width="27" height="13" fill="#d4d0c8"/>
<path d="M1378.5 369.0h8l-4 4z" fill="#000"/>
<text x="1339" y="365.5" font-family="Liberation Sans" font-size="18" fill="#000" textLength="7.4" lengthAdjust="spacingAndGlyphs" xml:space="preserve">2</text>
<rect x="657" y="388" width="95" height="37" fill="#ffffff"/>
<rect x="657" y="388" width="94" height="36" fill="#808080"/>
<rect x="658" y="389" width="93" height="35" fill="#d4d0c8"/>
<rect x="658" y="389" width="92" height="34" fill="#404040"/>
<rect x="659" y="390" width="91" height="33" fill="#fff"/>
<text x="677.6" y="409.5" font-family="Liberation Sans" font-size="18" fill="#000" textLength="38.2" lengthAdjust="spacingAndGlyphs" xml:space="preserve">0.525</text>
<rect x="763" y="388" width="80" height="37" fill="#000"/>
<rect x="764" y="389" width="78" height="35" fill="#404040"/>
<rect x="764" y="389" width="77" height="34" fill="#ffffff"/>
<rect x="765" y="390" width="76" height="33" fill="#d4d0c8"/>
<rect x="770" y="395" width="40" height="24" fill="#000"/>
<rect x="771" y="396" width="38" height="22" fill="#000"/>
<path d="M825 408h7l-3.5 6z" fill="#000"/>
<rect x="859" y="388" width="66" height="37" fill="#ffffff"/>
<rect x="859" y="388" width="65" height="36" fill="#808080"/>
<rect x="860" y="389" width="64" height="35" fill="#d4d0c8"/>
<rect x="860" y="389" width="63" height="34" fill="#404040"/>
<rect x="861" y="390" width="62" height="33" fill="#fff"/>
<rect x="893" y="390" width="30" height="17" fill="#404040"/>
<rect x="893" y="390" width="29" height="16" fill="#ffffff"/>
<rect x="894" y="391" width="28" height="15" fill="#808080"/>
<rect x="894" y="391" width="27" height="14" fill="#d4d0c8"/>
<path d="M903.5 401.0h8l-4-4z" fill="#000"/>
<rect x="893" y="407" width="30" height="16" fill="#404040"/>
<rect x="893" y="407" width="29" height="15" fill="#ffffff"/>
<rect x="894" y="408" width="28" height="14" fill="#808080"/>
<rect x="894" y="408" width="27" height="13" fill="#d4d0c8"/>
<path d="M903.5 413.0h8l-4 4z" fill="#000"/>
<text x="864" y="409.5" font-family="Liberation Sans" font-size="18" fill="#000" textLength="7.4" lengthAdjust="spacingAndGlyphs" xml:space="preserve">2</text>
<rect x="942" y="388" width="66" height="37" fill="#ffffff"/>
<rect x="942" y="388" width="65" height="36" fill="#808080"/>
<rect x="943" y="389" width="64" height="35" fill="#d4d0c8"/>
<rect x="943" y="389" width="63" height="34" fill="#404040"/>
<rect x="944" y="390" width="62" height="33" fill="#fff"/>
<rect x="976" y="390" width="30" height="17" fill="#404040"/>
<rect x="976" y="390" width="29" height="16" fill="#ffffff"/>
<rect x="977" y="391" width="28" height="15" fill="#808080"/>
<rect x="977" y="391" width="27" height="14" fill="#d4d0c8"/>
<path d="M986.5 401.0h8l-4-4z" fill="#000"/>
<rect x="976" y="407" width="30" height="16" fill="#404040"/>
<rect x="976" y="407" width="29" height="15" fill="#ffffff"/>
<rect x="977" y="408" width="28" height="14" fill="#808080"/>
<rect x="977" y="408" width="27" height="13" fill="#d4d0c8"/>
<path d="M986.5 413.0h8l-4 4z" fill="#000"/>
<text x="947" y="409.5" font-family="Liberation Sans" font-size="18" fill="#000" textLength="7.4" lengthAdjust="spacingAndGlyphs" xml:space="preserve">1</text>
<rect x="1048" y="388" width="95" height="37" fill="#ffffff"/>
<rect x="1048" y="388" width="94" height="36" fill="#808080"/>
<rect x="1049" y="389" width="93" height="35" fill="#d4d0c8"/>
<rect x="1049" y="389" width="92" height="34" fill="#404040"/>
<rect x="1050" y="390" width="91" height="33" fill="#fff"/>
<text x="1060" y="409.5" font-family="Liberation Sans" font-size="18" fill="#000" textLength="24.6" lengthAdjust="spacingAndGlyphs" xml:space="preserve">230</text>
<rect x="1155" y="388" width="80" height="37" fill="#000"/>
<rect x="1156" y="389" width="78" height="35" fill="#404040"/>
<rect x="1156" y="389" width="77" height="34" fill="#ffffff"/>
<rect x="1157" y="390" width="76" height="33" fill="#d4d0c8"/>
<rect x="1162" y="395" width="40" height="24" fill="#000"/>
<rect x="1163" y="396" width="38" height="22" fill="#006600"/>
<path d="M1217 408h7l-3.5 6z" fill="#000"/>
<rect x="1251" y="388" width="66" height="37" fill="#ffffff"/>
<rect x="1251" y="388" width="65" height="36" fill="#808080"/>
<rect x="1252" y="389" width="64" height="35" fill="#d4d0c8"/>
<rect x="1252" y="389" width="63" height="34" fill="#404040"/>
<rect x="1253" y="390" width="62" height="33" fill="#fff"/>
<rect x="1285" y="390" width="30" height="17" fill="#404040"/>
<rect x="1285" y="390" width="29" height="16" fill="#ffffff"/>
<rect x="1286" y="391" width="28" height="15" fill="#808080"/>
<rect x="1286" y="391" width="27" height="14" fill="#d4d0c8"/>
<path d="M1295.5 401.0h8l-4-4z" fill="#000"/>
<rect x="1285" y="407" width="30" height="16" fill="#404040"/>
<rect x="1285" y="407" width="29" height="15" fill="#ffffff"/>
<rect x="1286" y="408" width="28" height="14" fill="#808080"/>
<rect x="1286" y="408" width="27" height="13" fill="#d4d0c8"/>
<path d="M1295.5 413.0h8l-4 4z" fill="#000"/>
<text x="1256" y="409.5" font-family="Liberation Sans" font-size="18" fill="#000" textLength="7.4" lengthAdjust="spacingAndGlyphs" xml:space="preserve">3</text>
<rect x="1334" y="388" width="66" height="37" fill="#ffffff"/>
<rect x="1334" y="388" width="65" height="36" fill="#808080"/>
<rect x="1335" y="389" width="64" height="35" fill="#d4d0c8"/>
<rect x="1335" y="389" width="63" height="34" fill="#404040"/>
<rect x="1336" y="390" width="62" height="33" fill="#fff"/>
<rect x="1368" y="390" width="30" height="17" fill="#404040"/>
<rect x="1368" y="390" width="29" height="16" fill="#ffffff"/>
<rect x="1369" y="391" width="28" height="15" fill="#808080"/>
<rect x="1369" y="391" width="27" height="14" fill="#d4d0c8"/>
<path d="M1378.5 401.0h8l-4-4z" fill="#000"/>
<rect x="1368" y="407" width="30" height="16" fill="#404040"/>
<rect x="1368" y="407" width="29" height="15" fill="#ffffff"/>
<rect x="1369" y="408" width="28" height="14" fill="#808080"/>
<rect x="1369" y="408" width="27" height="13" fill="#d4d0c8"/>
<path d="M1378.5 413.0h8l-4 4z" fill="#000"/>
<text x="1339" y="409.5" font-family="Liberation Sans" font-size="18" fill="#000" textLength="7.4" lengthAdjust="spacingAndGlyphs" xml:space="preserve">2</text>
<rect x="657" y="431" width="95" height="37" fill="#ffffff"/>
<rect x="657" y="431" width="94" height="36" fill="#808080"/>
<rect x="658" y="432" width="93" height="35" fill="#d4d0c8"/>
<rect x="658" y="432" width="92" height="34" fill="#404040"/>
<rect x="659" y="433" width="91" height="33" fill="#fff"/>
<text x="677" y="452.5" font-family="Liberation Sans" font-size="18" fill="#000" textLength="29.6" lengthAdjust="spacingAndGlyphs" xml:space="preserve">3.15</text>
<rect x="763" y="431" width="80" height="37" fill="#000"/>
<rect x="764" y="432" width="78" height="35" fill="#404040"/>
<rect x="764" y="432" width="77" height="34" fill="#ffffff"/>
<rect x="765" y="433" width="76" height="33" fill="#d4d0c8"/>
<rect x="770" y="438" width="40" height="24" fill="#000"/>
<rect x="771" y="439" width="38" height="22" fill="#000"/>
<path d="M825 451h7l-3.5 6z" fill="#000"/>
<rect x="859" y="431" width="66" height="37" fill="#ffffff"/>
<rect x="859" y="431" width="65" height="36" fill="#808080"/>
<rect x="860" y="432" width="64" height="35" fill="#d4d0c8"/>
<rect x="860" y="432" width="63" height="34" fill="#404040"/>
<rect x="861" y="433" width="62" height="33" fill="#fff"/>
<rect x="893" y="433" width="30" height="17" fill="#404040"/>
<rect x="893" y="433" width="29" height="16" fill="#ffffff"/>
<rect x="894" y="434" width="28" height="15" fill="#808080"/>
<rect x="894" y="434" width="27" height="14" fill="#d4d0c8"/>
<path d="M903.5 444.0h8l-4-4z" fill="#000"/>
<rect x="893" y="450" width="30" height="16" fill="#404040"/>
<rect x="893" y="450" width="29" height="15" fill="#ffffff"/>
<rect x="894" y="451" width="28" height="14" fill="#808080"/>
<rect x="894" y="451" width="27" height="13" fill="#d4d0c8"/>
<path d="M903.5 456.0h8l-4 4z" fill="#000"/>
<text x="864" y="452.5" font-family="Liberation Sans" font-size="18" fill="#000" textLength="7.4" lengthAdjust="spacingAndGlyphs" xml:space="preserve">2</text>
<rect x="942" y="431" width="66" height="37" fill="#ffffff"/>
<rect x="942" y="431" width="65" height="36" fill="#808080"/>
<rect x="943" y="432" width="64" height="35" fill="#d4d0c8"/>
<rect x="943" y="432" width="63" height="34" fill="#404040"/>
<rect x="944" y="433" width="62" height="33" fill="#fff"/>
<rect x="976" y="433" width="30" height="17" fill="#404040"/>
<rect x="976" y="433" width="29" height="16" fill="#ffffff"/>
<rect x="977" y="434" width="28" height="15" fill="#808080"/>
<rect x="977" y="434" width="27" height="14" fill="#d4d0c8"/>
<path d="M986.5 444.0h8l-4-4z" fill="#000"/>
<rect x="976" y="450" width="30" height="16" fill="#404040"/>
<rect x="976" y="450" width="29" height="15" fill="#ffffff"/>
<rect x="977" y="451" width="28" height="14" fill="#808080"/>
<rect x="977" y="451" width="27" height="13" fill="#d4d0c8"/>
<path d="M986.5 456.0h8l-4 4z" fill="#000"/>
<text x="947" y="452.5" font-family="Liberation Sans" font-size="18" fill="#000" textLength="7.4" lengthAdjust="spacingAndGlyphs" xml:space="preserve">1</text>
<rect x="1048" y="431" width="95" height="37" fill="#ffffff"/>
<rect x="1048" y="431" width="94" height="36" fill="#808080"/>
<rect x="1049" y="432" width="93" height="35" fill="#d4d0c8"/>
<rect x="1049" y="432" width="92" height="34" fill="#404040"/>
<rect x="1050" y="433" width="91" height="33" fill="#fff"/>
<text x="1060" y="452.5" font-family="Liberation Sans" font-size="18" fill="#000" textLength="24.6" lengthAdjust="spacingAndGlyphs" xml:space="preserve">330</text>
<rect x="1155" y="431" width="80" height="37" fill="#000"/>
<rect x="1156" y="432" width="78" height="35" fill="#404040"/>
<rect x="1156" y="432" width="77" height="34" fill="#ffffff"/>
<rect x="1157" y="433" width="76" height="33" fill="#d4d0c8"/>
<rect x="1162" y="438" width="40" height="24" fill="#000"/>
<rect x="1163" y="439" width="38" height="22" fill="#000099"/>
<path d="M1217 451h7l-3.5 6z" fill="#000"/>
<rect x="1251" y="431" width="66" height="37" fill="#ffffff"/>
<rect x="1251" y="431" width="65" height="36" fill="#808080"/>
<rect x="1252" y="432" width="64" height="35" fill="#d4d0c8"/>
<rect x="1252" y="432" width="63" height="34" fill="#404040"/>
<rect x="1253" y="433" width="62" height="33" fill="#fff"/>
<rect x="1285" y="433" width="30" height="17" fill="#404040"/>
<rect x="1285" y="433" width="29" height="16" fill="#ffffff"/>
<rect x="1286" y="434" width="28" height="15" fill="#808080"/>
<rect x="1286" y="434" width="27" height="14" fill="#d4d0c8"/>
<path d="M1295.5 444.0h8l-4-4z" fill="#000"/>
<rect x="1285" y="450" width="30" height="16" fill="#404040"/>
<rect x="1285" y="450" width="29" height="15" fill="#ffffff"/>
<rect x="1286" y="451" width="28" height="14" fill="#808080"/>
<rect x="1286" y="451" width="27" height="13" fill="#d4d0c8"/>
<path d="M1295.5 456.0h8l-4 4z" fill="#000"/>
<text x="1256" y="452.5" font-family="Liberation Sans" font-size="18" fill="#000" textLength="7.4" lengthAdjust="spacingAndGlyphs" xml:space="preserve">3</text>
<rect x="1334" y="431" width="66" height="37" fill="#ffffff"/>
<rect x="1334" y="431" width="65" height="36" fill="#808080"/>
<rect x="1335" y="432" width="64" height="35" fill="#d4d0c8"/>
<rect x="1335" y="432" width="63" height="34" fill="#404040"/>
<rect x="1336" y="433" width="62" height="33" fill="#fff"/>
<rect x="1368" y="433" width="30" height="17" fill="#404040"/>
<rect x="1368" y="433" width="29" height="16" fill="#ffffff"/>
<rect x="1369" y="434" width="28" height="15" fill="#808080"/>
<rect x="1369" y="434" width="27" height="14" fill="#d4d0c8"/>
<path d="M1378.5 444.0h8l-4-4z" fill="#000"/>
<rect x="1368" y="450" width="30" height="16" fill="#404040"/>
<rect x="1368" y="450" width="29" height="15" fill="#ffffff"/>
<rect x="1369" y="451" width="28" height="14" fill="#808080"/>
<rect x="1369" y="451" width="27" height="13" fill="#d4d0c8"/>
<path d="M1378.5 456.0h8l-4 4z" fill="#000"/>
<text x="1339" y="452.5" font-family="Liberation Sans" font-size="18" fill="#000" textLength="7.4" lengthAdjust="spacingAndGlyphs" xml:space="preserve">2</text>
<rect x="657" y="475" width="95" height="37" fill="#ffffff"/>
<rect x="657" y="475" width="94" height="36" fill="#808080"/>
<rect x="658" y="476" width="93" height="35" fill="#d4d0c8"/>
<rect x="658" y="476" width="92" height="34" fill="#404040"/>
<rect x="659" y="477" width="91" height="33" fill="#fff"/>
<text x="676.7" y="496.5" font-family="Liberation Sans" font-size="18" fill="#000" textLength="21.0" lengthAdjust="spacingAndGlyphs" xml:space="preserve">6.3</text>
<rect x="763" y="475" width="80" height="37" fill="#000"/>
<rect x="764" y="476" width="78" height="35" fill="#404040"/>
<rect x="764" y="476" width="77" height="34" fill="#ffffff"/>
<rect x="765" y="477" width="76" height="33" fill="#d4d0c8"/>
<rect x="770" y="482" width="40" height="24" fill="#000"/>
<rect x="771" y="483" width="38" height="22" fill="#000"/>
<path d="M825 495h7l-3.5 6z" fill="#000"/>
<rect x="859" y="475" width="66" height="37" fill="#ffffff"/>
<rect x="859" y="475" width="65" height="36" fill="#808080"/>
<rect x="860" y="476" width="64" height="35" fill="#d4d0c8"/>
<rect x="860" y="476" width="63" height="34" fill="#404040"/>
<rect x="861" y="477" width="62" height="33" fill="#fff"/>
<rect x="893" y="477" width="30" height="17" fill="#404040"/>
<rect x="893" y="477" width="29" height="16" fill="#ffffff"/>
<rect x="894" y="478" width="28" height="15" fill="#808080"/>
<rect x="894" y="478" width="27" height="14" fill="#d4d0c8"/>
<path d="M903.5 488.0h8l-4-4z" fill="#000"/>
<rect x="893" y="494" width="30" height="16" fill="#404040"/>
<rect x="893" y="494" width="29" height="15" fill="#ffffff"/>
<rect x="894" y="495" width="28" height="14" fill="#808080"/>
<rect x="894" y="495" width="27" height="13" fill="#d4d0c8"/>
<path d="M903.5 500.0h8l-4 4z" fill="#000"/>
<text x="864" y="496.5" font-family="Liberation Sans" font-size="18" fill="#000" textLength="7.4" lengthAdjust="spacingAndGlyphs" xml:space="preserve">2</text>
<rect x="942" y="475" width="66" height="37" fill="#ffffff"/>
<rect x="942" y="475" width="65" height="36" fill="#808080"/>
<rect x="943" y="476" width="64" height="35" fill="#d4d0c8"/>
<rect x="943" y="476" width="63" height="34" fill="#404040"/>
<rect x="944" y="477" width="62" height="33" fill="#fff"/>
<rect x="976" y="477" width="30" height="17" fill="#404040"/>
<rect x="976" y="477" width="29" height="16" fill="#ffffff"/>
<rect x="977" y="478" width="28" height="15" fill="#808080"/>
<rect x="977" y="478" width="27" height="14" fill="#d4d0c8"/>
<path d="M986.5 488.0h8l-4-4z" fill="#000"/>
<rect x="976" y="494" width="30" height="16" fill="#404040"/>
<rect x="976" y="494" width="29" height="15" fill="#ffffff"/>
<rect x="977" y="495" width="28" height="14" fill="#808080"/>
<rect x="977" y="495" width="27" height="13" fill="#d4d0c8"/>
<path d="M986.5 500.0h8l-4 4z" fill="#000"/>
<text x="947" y="496.5" font-family="Liberation Sans" font-size="18" fill="#000" textLength="7.4" lengthAdjust="spacingAndGlyphs" xml:space="preserve">1</text>
<rect x="1048" y="475" width="95" height="37" fill="#ffffff"/>
<rect x="1048" y="475" width="94" height="36" fill="#808080"/>
<rect x="1049" y="476" width="93" height="35" fill="#d4d0c8"/>
<rect x="1049" y="476" width="92" height="34" fill="#404040"/>
<rect x="1050" y="477" width="91" height="33" fill="#fff"/>
<text x="1060" y="496.5" font-family="Liberation Sans" font-size="18" fill="#000" textLength="24.6" lengthAdjust="spacingAndGlyphs" xml:space="preserve">500</text>
<rect x="1155" y="475" width="80" height="37" fill="#000"/>
<rect x="1156" y="476" width="78" height="35" fill="#404040"/>
<rect x="1156" y="476" width="77" height="34" fill="#ffffff"/>
<rect x="1157" y="477" width="76" height="33" fill="#d4d0c8"/>
<rect x="1162" y="482" width="40" height="24" fill="#000"/>
<rect x="1163" y="483" width="38" height="22" fill="#0000ff"/>
<path d="M1217 495h7l-3.5 6z" fill="#000"/>
<rect x="1251" y="475" width="66" height="37" fill="#ffffff"/>
<rect x="1251" y="475" width="65" height="36" fill="#808080"/>
<rect x="1252" y="476" width="64" height="35" fill="#d4d0c8"/>
<rect x="1252" y="476" width="63" height="34" fill="#404040"/>
<rect x="1253" y="477" width="62" height="33" fill="#fff"/>
<rect x="1285" y="477" width="30" height="17" fill="#404040"/>
<rect x="1285" y="477" width="29" height="16" fill="#ffffff"/>
<rect x="1286" y="478" width="28" height="15" fill="#808080"/>
<rect x="1286" y="478" width="27" height="14" fill="#d4d0c8"/>
<path d="M1295.5 488.0h8l-4-4z" fill="#000"/>
<rect x="1285" y="494" width="30" height="16" fill="#404040"/>
<rect x="1285" y="494" width="29" height="15" fill="#ffffff"/>
<rect x="1286" y="495" width="28" height="14" fill="#808080"/>
<rect x="1286" y="495" width="27" height="13" fill="#d4d0c8"/>
<path d="M1295.5 500.0h8l-4 4z" fill="#000"/>
<text x="1256" y="496.5" font-family="Liberation Sans" font-size="18" fill="#000" textLength="7.4" lengthAdjust="spacingAndGlyphs" xml:space="preserve">4</text>
<rect x="1334" y="475" width="66" height="37" fill="#ffffff"/>
<rect x="1334" y="475" width="65" height="36" fill="#808080"/>
<rect x="1335" y="476" width="64" height="35" fill="#d4d0c8"/>
<rect x="1335" y="476" width="63" height="34" fill="#404040"/>
<rect x="1336" y="477" width="62" height="33" fill="#fff"/>
<rect x="1368" y="477" width="30" height="17" fill="#404040"/>
<rect x="1368" y="477" width="29" height="16" fill="#ffffff"/>
<rect x="1369" y="478" width="28" height="15" fill="#808080"/>
<rect x="1369" y="478" width="27" height="14" fill="#d4d0c8"/>
<path d="M1378.5 488.0h8l-4-4z" fill="#000"/>
<rect x="1368" y="494" width="30" height="16" fill="#404040"/>
<rect x="1368" y="494" width="29" height="15" fill="#ffffff"/>
<rect x="1369" y="495" width="28" height="14" fill="#808080"/>
<rect x="1369" y="495" width="27" height="13" fill="#d4d0c8"/>
<path d="M1378.5 500.0h8l-4 4z" fill="#000"/>
<text x="1339" y="496.5" font-family="Liberation Sans" font-size="18" fill="#000" textLength="7.4" lengthAdjust="spacingAndGlyphs" xml:space="preserve">2</text>
<rect x="657" y="518" width="95" height="37" fill="#ffffff"/>
<rect x="657" y="518" width="94" height="36" fill="#808080"/>
<rect x="658" y="519" width="93" height="35" fill="#d4d0c8"/>
<rect x="658" y="519" width="92" height="34" fill="#404040"/>
<rect x="659" y="520" width="91" height="33" fill="#fff"/>
<text x="673.2" y="539.5" font-family="Liberation Sans" font-size="18" fill="#000" textLength="29.6" lengthAdjust="spacingAndGlyphs" xml:space="preserve">10.5</text>
<rect x="763" y="518" width="80" height="37" fill="#000"/>
<rect x="764" y="519" width="78" height="35" fill="#404040"/>
<rect x="764" y="519" width="77" height="34" fill="#ffffff"/>
<rect x="765" y="520" width="76" height="33" fill="#d4d0c8"/>
<rect x="770" y="525" width="40" height="24" fill="#000"/>
<rect x="771" y="526" width="38" height="22" fill="#000"/>
<path d="M825 538h7l-3.5 6z" fill="#000"/>
<rect x="859" y="518" width="66" height="37" fill="#ffffff"/>
<rect x="859" y="518" width="65" height="36" fill="#808080"/>
<rect x="860" y="519" width="64" height="35" fill="#d4d0c8"/>
<rect x="860" y="519" width="63" height="34" fill="#404040"/>
<rect x="861" y="520" width="62" height="33" fill="#fff"/>
<rect x="893" y="520" width="30" height="17" fill="#404040"/>
<rect x="893" y="520" width="29" height="16" fill="#ffffff"/>
<rect x="894" y="521" width="28" height="15" fill="#808080"/>
<rect x="894" y="521" width="27" height="14" fill="#d4d0c8"/>
<path d="M903.5 531.0h8l-4-4z" fill="#000"/>
<rect x="893" y="537" width="30" height="16" fill="#404040"/>
<rect x="893" y="537" width="29" height="15" fill="#ffffff"/>
<rect x="894" y="538" width="28" height="14" fill="#808080"/>
<rect x="894" y="538" width="27" height="13" fill="#d4d0c8"/>
<path d="M903.5 543.0h8l-4 4z" fill="#000"/>
<text x="864" y="539.5" font-family="Liberation Sans" font-size="18" fill="#000" textLength="7.4" lengthAdjust="spacingAndGlyphs" xml:space="preserve">2</text>
<rect x="942" y="518" width="66" height="37" fill="#ffffff"/>
<rect x="942" y="518" width="65" height="36" fill="#808080"/>
<rect x="943" y="519" width="64" height="35" fill="#d4d0c8"/>
<rect x="943" y="519" width="63" height="34" fill="#404040"/>
<rect x="944" y="520" width="62" height="33" fill="#fff"/>
<rect x="976" y="520" width="30" height="17" fill="#404040"/>
<rect x="976" y="520" width="29" height="16" fill="#ffffff"/>
<rect x="977" y="521" width="28" height="15" fill="#808080"/>
<rect x="977" y="521" width="27" height="14" fill="#d4d0c8"/>
<path d="M986.5 531.0h8l-4-4z" fill="#000"/>
<rect x="976" y="537" width="30" height="16" fill="#404040"/>
<rect x="976" y="537" width="29" height="15" fill="#ffffff"/>
<rect x="977" y="538" width="28" height="14" fill="#808080"/>
<rect x="977" y="538" width="27" height="13" fill="#d4d0c8"/>
<path d="M986.5 543.0h8l-4 4z" fill="#000"/>
<text x="947" y="539.5" font-family="Liberation Sans" font-size="18" fill="#000" textLength="7.4" lengthAdjust="spacingAndGlyphs" xml:space="preserve">1</text>
<rect x="1048" y="518" width="95" height="37" fill="#ffffff"/>
<rect x="1048" y="518" width="94" height="36" fill="#808080"/>
<rect x="1049" y="519" width="93" height="35" fill="#d4d0c8"/>
<rect x="1049" y="519" width="92" height="34" fill="#404040"/>
<rect x="1050" y="520" width="91" height="33" fill="#fff"/>
<text x="1060" y="539.5" font-family="Liberation Sans" font-size="18" fill="#000" textLength="24.6" lengthAdjust="spacingAndGlyphs" xml:space="preserve">750</text>
<rect x="1155" y="518" width="80" height="37" fill="#000"/>
<rect x="1156" y="519" width="78" height="35" fill="#404040"/>
<rect x="1156" y="519" width="77" height="34" fill="#ffffff"/>
<rect x="1157" y="520" width="76" height="33" fill="#d4d0c8"/>
<rect x="1162" y="525" width="40" height="24" fill="#000"/>
<rect x="1163" y="526" width="38" height="22" fill="#660066"/>
<path d="M1217 538h7l-3.5 6z" fill="#000"/>
<rect x="1251" y="518" width="66" height="37" fill="#ffffff"/>
<rect x="1251" y="518" width="65" height="36" fill="#808080"/>
<rect x="1252" y="519" width="64" height="35" fill="#d4d0c8"/>
<rect x="1252" y="519" width="63" height="34" fill="#404040"/>
<rect x="1253" y="520" width="62" height="33" fill="#fff"/>
<rect x="1285" y="520" width="30" height="17" fill="#404040"/>
<rect x="1285" y="520" width="29" height="16" fill="#ffffff"/>
<rect x="1286" y="521" width="28" height="15" fill="#808080"/>
<rect x="1286" y="521" width="27" height="14" fill="#d4d0c8"/>
<path d="M1295.5 531.0h8l-4-4z" fill="#000"/>
<rect x="1285" y="537" width="30" height="16" fill="#404040"/>
<rect x="1285" y="537" width="29" height="15" fill="#ffffff"/>
<rect x="1286" y="538" width="28" height="14" fill="#808080"/>
<rect x="1286" y="538" width="27" height="13" fill="#d4d0c8"/>
<path d="M1295.5 543.0h8l-4 4z" fill="#000"/>
<text x="1256" y="539.5" font-family="Liberation Sans" font-size="18" fill="#000" textLength="7.4" lengthAdjust="spacingAndGlyphs" xml:space="preserve">5</text>
<rect x="1334" y="518" width="66" height="37" fill="#ffffff"/>
<rect x="1334" y="518" width="65" height="36" fill="#808080"/>
<rect x="1335" y="519" width="64" height="35" fill="#d4d0c8"/>
<rect x="1335" y="519" width="63" height="34" fill="#404040"/>
<rect x="1336" y="520" width="62" height="33" fill="#fff"/>
<rect x="1368" y="520" width="30" height="17" fill="#404040"/>
<rect x="1368" y="520" width="29" height="16" fill="#ffffff"/>
<rect x="1369" y="521" width="28" height="15" fill="#808080"/>
<rect x="1369" y="521" width="27" height="14" fill="#d4d0c8"/>
<path d="M1378.5 531.0h8l-4-4z" fill="#000"/>
<rect x="1368" y="537" width="30" height="16" fill="#404040"/>
<rect x="1368" y="537" width="29" height="15" fill="#ffffff"/>
<rect x="1369" y="538" width="28" height="14" fill="#808080"/>
<rect x="1369" y="538" width="27" height="13" fill="#d4d0c8"/>
<path d="M1378.5 543.0h8l-4 4z" fill="#000"/>
<text x="1339" y="539.5" font-family="Liberation Sans" font-size="18" fill="#000" textLength="7.4" lengthAdjust="spacingAndGlyphs" xml:space="preserve">3</text>
<rect x="657" y="562" width="95" height="37" fill="#ffffff"/>
<rect x="657" y="562" width="94" height="36" fill="#808080"/>
<rect x="658" y="563" width="93" height="35" fill="#d4d0c8"/>
<rect x="658" y="563" width="92" height="34" fill="#404040"/>
<rect x="659" y="564" width="91" height="33" fill="#fff"/>
<text x="673" y="583.5" font-family="Liberation Sans" font-size="18" fill="#000" textLength="29.6" lengthAdjust="spacingAndGlyphs" xml:space="preserve">13.8</text>
<rect x="763" y="562" width="80" height="37" fill="#000"/>
<rect x="764" y="563" width="78" height="35" fill="#404040"/>
<rect x="764" y="563" width="77" height="34" fill="#ffffff"/>
<rect x="765" y="564" width="76" height="33" fill="#d4d0c8"/>
<rect x="770" y="569" width="40" height="24" fill="#000"/>
<rect x="771" y="570" width="38" height="22" fill="#000"/>
<path d="M825 582h7l-3.5 6z" fill="#000"/>
<rect x="859" y="562" width="66" height="37" fill="#ffffff"/>
<rect x="859" y="562" width="65" height="36" fill="#808080"/>
<rect x="860" y="563" width="64" height="35" fill="#d4d0c8"/>
<rect x="860" y="563" width="63" height="34" fill="#404040"/>
<rect x="861" y="564" width="62" height="33" fill="#fff"/>
<rect x="893" y="564" width="30" height="17" fill="#404040"/>
<rect x="893" y="564" width="29" height="16" fill="#ffffff"/>
<rect x="894" y="565" width="28" height="15" fill="#808080"/>
<rect x="894" y="565" width="27" height="14" fill="#d4d0c8"/>
<path d="M903.5 575.0h8l-4-4z" fill="#000"/>
<rect x="893" y="581" width="30" height="16" fill="#404040"/>
<rect x="893" y="581" width="29" height="15" fill="#ffffff"/>
<rect x="894" y="582" width="28" height="14" fill="#808080"/>
<rect x="894" y="582" width="27" height="13" fill="#d4d0c8"/>
<path d="M903.5 587.0h8l-4 4z" fill="#000"/>
<text x="864" y="583.5" font-family="Liberation Sans" font-size="18" fill="#000" textLength="7.4" lengthAdjust="spacingAndGlyphs" xml:space="preserve">2</text>
<rect x="942" y="562" width="66" height="37" fill="#ffffff"/>
<rect x="942" y="562" width="65" height="36" fill="#808080"/>
<rect x="943" y="563" width="64" height="35" fill="#d4d0c8"/>
<rect x="943" y="563" width="63" height="34" fill="#404040"/>
<rect x="944" y="564" width="62" height="33" fill="#fff"/>
<rect x="976" y="564" width="30" height="17" fill="#404040"/>
<rect x="976" y="564" width="29" height="16" fill="#ffffff"/>
<rect x="977" y="565" width="28" height="15" fill="#808080"/>
<rect x="977" y="565" width="27" height="14" fill="#d4d0c8"/>
<path d="M986.5 575.0h8l-4-4z" fill="#000"/>
<rect x="976" y="581" width="30" height="16" fill="#404040"/>
<rect x="976" y="581" width="29" height="15" fill="#ffffff"/>
<rect x="977" y="582" width="28" height="14" fill="#808080"/>
<rect x="977" y="582" width="27" height="13" fill="#d4d0c8"/>
<path d="M986.5 587.0h8l-4 4z" fill="#000"/>
<text x="947" y="583.5" font-family="Liberation Sans" font-size="18" fill="#000" textLength="7.4" lengthAdjust="spacingAndGlyphs" xml:space="preserve">1</text>
<rect x="1048" y="562" width="95" height="37" fill="#ffffff"/>
<rect x="1048" y="562" width="94" height="36" fill="#808080"/>
<rect x="1049" y="563" width="93" height="35" fill="#d4d0c8"/>
<rect x="1049" y="563" width="92" height="34" fill="#404040"/>
<rect x="1050" y="564" width="91" height="33" fill="#fff"/>
<text x="1057" y="583.5" font-family="Liberation Sans" font-size="18" fill="#000" textLength="33.2" lengthAdjust="spacingAndGlyphs" xml:space="preserve">1150</text>
<rect x="1155" y="562" width="80" height="37" fill="#000"/>
<rect x="1156" y="563" width="78" height="35" fill="#404040"/>
<rect x="1156" y="563" width="77" height="34" fill="#ffffff"/>
<rect x="1157" y="564" width="76" height="33" fill="#d4d0c8"/>
<rect x="1162" y="569" width="40" height="24" fill="#000"/>
<rect x="1163" y="570" width="38" height="22" fill="#cc0066"/>
<path d="M1217 582h7l-3.5 6z" fill="#000"/>
<rect x="1251" y="562" width="66" height="37" fill="#ffffff"/>
<rect x="1251" y="562" width="65" height="36" fill="#808080"/>
<rect x="1252" y="563" width="64" height="35" fill="#d4d0c8"/>
<rect x="1252" y="563" width="63" height="34" fill="#404040"/>
<rect x="1253" y="564" width="62" height="33" fill="#fff"/>
<rect x="1285" y="564" width="30" height="17" fill="#404040"/>
<rect x="1285" y="564" width="29" height="16" fill="#ffffff"/>
<rect x="1286" y="565" width="28" height="15" fill="#808080"/>
<rect x="1286" y="565" width="27" height="14" fill="#d4d0c8"/>
<path d="M1295.5 575.0h8l-4-4z" fill="#000"/>
<rect x="1285" y="581" width="30" height="16" fill="#404040"/>
<rect x="1285" y="581" width="29" height="15" fill="#ffffff"/>
<rect x="1286" y="582" width="28" height="14" fill="#808080"/>
<rect x="1286" y="582" width="27" height="13" fill="#d4d0c8"/>
<path d="M1295.5 587.0h8l-4 4z" fill="#000"/>
<text x="1256" y="583.5" font-family="Liberation Sans" font-size="18" fill="#000" textLength="7.4" lengthAdjust="spacingAndGlyphs" xml:space="preserve">5</text>
<rect x="1334" y="562" width="66" height="37" fill="#ffffff"/>
<rect x="1334" y="562" width="65" height="36" fill="#808080"/>
<rect x="1335" y="563" width="64" height="35" fill="#d4d0c8"/>
<rect x="1335" y="563" width="63" height="34" fill="#404040"/>
<rect x="1336" y="564" width="62" height="33" fill="#fff"/>
<rect x="1368" y="564" width="30" height="17" fill="#404040"/>
<rect x="1368" y="564" width="29" height="16" fill="#ffffff"/>
<rect x="1369" y="565" width="28" height="15" fill="#808080"/>
<rect x="1369" y="565" width="27" height="14" fill="#d4d0c8"/>
<path d="M1378.5 575.0h8l-4-4z" fill="#000"/>
<rect x="1368" y="581" width="30" height="16" fill="#404040"/>
<rect x="1368" y="581" width="29" height="15" fill="#ffffff"/>
<rect x="1369" y="582" width="28" height="14" fill="#808080"/>
<rect x="1369" y="582" width="27" height="13" fill="#d4d0c8"/>
<path d="M1378.5 587.0h8l-4 4z" fill="#000"/>
<text x="1339" y="583.5" font-family="Liberation Sans" font-size="18" fill="#000" textLength="7.4" lengthAdjust="spacingAndGlyphs" xml:space="preserve">3</text>
<rect x="657" y="605" width="95" height="37" fill="#ffffff"/>
<rect x="657" y="605" width="94" height="36" fill="#808080"/>
<rect x="658" y="606" width="93" height="35" fill="#d4d0c8"/>
<rect x="658" y="606" width="92" height="34" fill="#404040"/>
<rect x="659" y="607" width="91" height="33" fill="#fff"/>
<text x="673" y="626.5" font-family="Liberation Sans" font-size="18" fill="#000" textLength="38.2" lengthAdjust="spacingAndGlyphs" xml:space="preserve">15.75</text>
<rect x="763" y="605" width="80" height="37" fill="#000"/>
<rect x="764" y="606" width="78" height="35" fill="#404040"/>
<rect x="764" y="606" width="77" height="34" fill="#ffffff"/>
<rect x="765" y="607" width="76" height="33" fill="#d4d0c8"/>
<rect x="770" y="612" width="40" height="24" fill="#000"/>
<rect x="771" y="613" width="38" height="22" fill="#003366"/>
<path d="M825 625h7l-3.5 6z" fill="#000"/>
<rect x="859" y="605" width="66" height="37" fill="#ffffff"/>
<rect x="859" y="605" width="65" height="36" fill="#808080"/>
<rect x="860" y="606" width="64" height="35" fill="#d4d0c8"/>
<rect x="860" y="606" width="63" height="34" fill="#404040"/>
<rect x="861" y="607" width="62" height="33" fill="#fff"/>
<rect x="893" y="607" width="30" height="17" fill="#404040"/>
<rect x="893" y="607" width="29" height="16" fill="#ffffff"/>
<rect x="894" y="608" width="28" height="15" fill="#808080"/>
<rect x="894" y="608" width="27" height="14" fill="#d4d0c8"/>
<path d="M903.5 618.0h8l-4-4z" fill="#000"/>
<rect x="893" y="624" width="30" height="16" fill="#404040"/>
<rect x="893" y="624" width="29" height="15" fill="#ffffff"/>
<rect x="894" y="625" width="28" height="14" fill="#808080"/>
<rect x="894" y="625" width="27" height="13" fill="#d4d0c8"/>
<path d="M903.5 630.0h8l-4 4z" fill="#000"/>
<text x="864" y="626.5" font-family="Liberation Sans" font-size="18" fill="#000" textLength="7.4" lengthAdjust="spacingAndGlyphs" xml:space="preserve">2</text>
<rect x="942" y="605" width="66" height="37" fill="#ffffff"/>
<rect x="942" y="605" width="65" height="36" fill="#808080"/>
<rect x="943" y="606" width="64" height="35" fill="#d4d0c8"/>
<rect x="943" y="606" width="63" height="34" fill="#404040"/>
<rect x="944" y="607" width="62" height="33" fill="#fff"/>
<rect x="976" y="607" width="30" height="17" fill="#404040"/>
<rect x="976" y="607" width="29" height="16" fill="#ffffff"/>
<rect x="977" y="608" width="28" height="15" fill="#808080"/>
<rect x="977" y="608" width="27" height="14" fill="#d4d0c8"/>
<path d="M986.5 618.0h8l-4-4z" fill="#000"/>
<rect x="976" y="624" width="30" height="16" fill="#404040"/>
<rect x="976" y="624" width="29" height="15" fill="#ffffff"/>
<rect x="977" y="625" width="28" height="14" fill="#808080"/>
<rect x="977" y="625" width="27" height="13" fill="#d4d0c8"/>
<path d="M986.5 630.0h8l-4 4z" fill="#000"/>
<text x="947" y="626.5" font-family="Liberation Sans" font-size="18" fill="#000" textLength="7.4" lengthAdjust="spacingAndGlyphs" xml:space="preserve">1</text>
<rect x="1048" y="605" width="95" height="37" fill="#ffffff"/>
<rect x="1048" y="605" width="94" height="36" fill="#808080"/>
<rect x="1049" y="606" width="93" height="35" fill="#d4d0c8"/>
<rect x="1049" y="606" width="92" height="34" fill="#404040"/>
<rect x="1050" y="607" width="91" height="33" fill="#fff"/>
<text x="1069" y="626.5" font-family="Liberation Sans" font-size="18" fill="#000" textLength="7.4" lengthAdjust="spacingAndGlyphs" xml:space="preserve">0</text>
<rect x="1155" y="605" width="80" height="37" fill="#000"/>
<rect x="1156" y="606" width="78" height="35" fill="#404040"/>
<rect x="1156" y="606" width="77" height="34" fill="#ffffff"/>
<rect x="1157" y="607" width="76" height="33" fill="#d4d0c8"/>
<rect x="1162" y="612" width="40" height="24" fill="#000"/>
<rect x="1163" y="613" width="38" height="22" fill="#000"/>
<path d="M1217 625h7l-3.5 6z" fill="#000"/>
<rect x="1251" y="605" width="66" height="37" fill="#ffffff"/>
<rect x="1251" y="605" width="65" height="36" fill="#808080"/>
<rect x="1252" y="606" width="64" height="35" fill="#d4d0c8"/>
<rect x="1252" y="606" width="63" height="34" fill="#404040"/>
<rect x="1253" y="607" width="62" height="33" fill="#fff"/>
<rect x="1285" y="607" width="30" height="17" fill="#404040"/>
<rect x="1285" y="607" width="29" height="16" fill="#ffffff"/>
<rect x="1286" y="608" width="28" height="15" fill="#808080"/>
<rect x="1286" y="608" width="27" height="14" fill="#d4d0c8"/>
<path d="M1295.5 618.0h8l-4-4z" fill="#000"/>
<rect x="1285" y="624" width="30" height="16" fill="#404040"/>
<rect x="1285" y="624" width="29" height="15" fill="#ffffff"/>
<rect x="1286" y="625" width="28" height="14" fill="#808080"/>
<rect x="1286" y="625" width="27" height="13" fill="#d4d0c8"/>
<path d="M1295.5 630.0h8l-4 4z" fill="#000"/>
<text x="1256" y="626.5" font-family="Liberation Sans" font-size="18" fill="#000" textLength="7.4" lengthAdjust="spacingAndGlyphs" xml:space="preserve">2</text>
<rect x="1334" y="605" width="66" height="37" fill="#ffffff"/>
<rect x="1334" y="605" width="65" height="36" fill="#808080"/>
<rect x="1335" y="606" width="64" height="35" fill="#d4d0c8"/>
<rect x="1335" y="606" width="63" height="34" fill="#404040"/>
<rect x="1336" y="607" width="62" height="33" fill="#fff"/>
<rect x="1368" y="607" width="30" height="17" fill="#404040"/>
<rect x="1368" y="607" width="29" height="16" fill="#ffffff"/>
<rect x="1369" y="608" width="28" height="15" fill="#808080"/>
<rect x="1369" y="608" width="27" height="14" fill="#d4d0c8"/>
<path d="M1378.5 618.0h8l-4-4z" fill="#000"/>
<rect x="1368" y="624" width="30" height="16" fill="#404040"/>
<rect x="1368" y="624" width="29" height="15" fill="#ffffff"/>
<rect x="1369" y="625" width="28" height="14" fill="#808080"/>
<rect x="1369" y="625" width="27" height="13" fill="#d4d0c8"/>
<path d="M1378.5 630.0h8l-4 4z" fill="#000"/>
<text x="1339" y="626.5" font-family="Liberation Sans" font-size="18" fill="#000" textLength="7.4" lengthAdjust="spacingAndGlyphs" xml:space="preserve">1</text>
<rect x="657" y="649" width="95" height="37" fill="#ffffff"/>
<rect x="657" y="649" width="94" height="36" fill="#808080"/>
<rect x="658" y="650" width="93" height="35" fill="#d4d0c8"/>
<rect x="658" y="650" width="92" height="34" fill="#404040"/>
<rect x="659" y="651" width="91" height="33" fill="#fff"/>
<text x="673" y="670.5" font-family="Liberation Sans" font-size="18" fill="#000" textLength="16.0" lengthAdjust="spacingAndGlyphs" xml:space="preserve">20</text>
<rect x="763" y="649" width="80" height="37" fill="#000"/>
<rect x="764" y="650" width="78" height="35" fill="#404040"/>
<rect x="764" y="650" width="77" height="34" fill="#ffffff"/>
<rect x="765" y="651" width="76" height="33" fill="#d4d0c8"/>
<rect x="770" y="656" width="40" height="24" fill="#000"/>
<rect x="771" y="657" width="38" height="22" fill="#003366"/>
<path d="M825 669h7l-3.5 6z" fill="#000"/>
<rect x="859" y="649" width="66" height="37" fill="#ffffff"/>
<rect x="859" y="649" width="65" height="36" fill="#808080"/>
<rect x="860" y="650" width="64" height="35" fill="#d4d0c8"/>
<rect x="860" y="650" width="63" height="34" fill="#404040"/>
<rect x="861" y="651" width="62" height="33" fill="#fff"/>
<rect x="893" y="651" width="30" height="17" fill="#404040"/>
<rect x="893" y="651" width="29" height="16" fill="#ffffff"/>
<rect x="894" y="652" width="28" height="15" fill="#808080"/>
<rect x="894" y="652" width="27" height="14" fill="#d4d0c8"/>
<path d="M903.5 662.0h8l-4-4z" fill="#000"/>
<rect x="893" y="668" width="30" height="16" fill="#404040"/>
<rect x="893" y="668" width="29" height="15" fill="#ffffff"/>
<rect x="894" y="669" width="28" height="14" fill="#808080"/>
<rect x="894" y="669" width="27" height="13" fill="#d4d0c8"/>
<path d="M903.5 674.0h8l-4 4z" fill="#000"/>
<text x="864" y="670.5" font-family="Liberation Sans" font-size="18" fill="#000" textLength="7.4" lengthAdjust="spacingAndGlyphs" xml:space="preserve">3</text>
<rect x="942" y="649" width="66" height="37" fill="#ffffff"/>
<rect x="942" y="649" width="65" height="36" fill="#808080"/>
<rect x="943" y="650" width="64" height="35" fill="#d4d0c8"/>
<rect x="943" y="650" width="63" height="34" fill="#404040"/>
<rect x="944" y="651" width="62" height="33" fill="#fff"/>
<rect x="976" y="651" width="30" height="17" fill="#404040"/>
<rect x="976" y="651" width="29" height="16" fill="#ffffff"/>
<rect x="977" y="652" width="28" height="15" fill="#808080"/>
<rect x="977" y="652" width="27" height="14" fill="#d4d0c8"/>
<path d="M986.5 662.0h8l-4-4z" fill="#000"/>
<rect x="976" y="668" width="30" height="16" fill="#404040"/>
<rect x="976" y="668" width="29" height="15" fill="#ffffff"/>
<rect x="977" y="669" width="28" height="14" fill="#808080"/>
<rect x="977" y="669" width="27" height="13" fill="#d4d0c8"/>
<path d="M986.5 674.0h8l-4 4z" fill="#000"/>
<text x="947" y="670.5" font-family="Liberation Sans" font-size="18" fill="#000" textLength="7.4" lengthAdjust="spacingAndGlyphs" xml:space="preserve">1</text>
<rect x="1048" y="649" width="95" height="37" fill="#ffffff"/>
<rect x="1048" y="649" width="94" height="36" fill="#808080"/>
<rect x="1049" y="650" width="93" height="35" fill="#d4d0c8"/>
<rect x="1049" y="650" width="92" height="34" fill="#404040"/>
<rect x="1050" y="651" width="91" height="33" fill="#fff"/>
<text x="1069" y="670.5" font-family="Liberation Sans" font-size="18" fill="#000" textLength="7.4" lengthAdjust="spacingAndGlyphs" xml:space="preserve">0</text>
<rect x="1155" y="649" width="80" height="37" fill="#000"/>
<rect x="1156" y="650" width="78" height="35" fill="#404040"/>
<rect x="1156" y="650" width="77" height="34" fill="#ffffff"/>
<rect x="1157" y="651" width="76" height="33" fill="#d4d0c8"/>
<rect x="1162" y="656" width="40" height="24" fill="#000"/>
<rect x="1163" y="657" width="38" height="22" fill="#000"/>
<path d="M1217 669h7l-3.5 6z" fill="#000"/>
<rect x="1251" y="649" width="66" height="37" fill="#ffffff"/>
<rect x="1251" y="649" width="65" height="36" fill="#808080"/>
<rect x="1252" y="650" width="64" height="35" fill="#d4d0c8"/>
<rect x="1252" y="650" width="63" height="34" fill="#404040"/>
<rect x="1253" y="651" width="62" height="33" fill="#fff"/>
<rect x="1285" y="651" width="30" height="17" fill="#404040"/>
<rect x="1285" y="651" width="29" height="16" fill="#ffffff"/>
<rect x="1286" y="652" width="28" height="15" fill="#808080"/>
<rect x="1286" y="652" width="27" height="14" fill="#d4d0c8"/>
<path d="M1295.5 662.0h8l-4-4z" fill="#000"/>
<rect x="1285" y="668" width="30" height="16" fill="#404040"/>
<rect x="1285" y="668" width="29" height="15" fill="#ffffff"/>
<rect x="1286" y="669" width="28" height="14" fill="#808080"/>
<rect x="1286" y="669" width="27" height="13" fill="#d4d0c8"/>
<path d="M1295.5 674.0h8l-4 4z" fill="#000"/>
<text x="1256" y="670.5" font-family="Liberation Sans" font-size="18" fill="#000" textLength="7.4" lengthAdjust="spacingAndGlyphs" xml:space="preserve">2</text>
<rect x="1334" y="649" width="66" height="37" fill="#ffffff"/>
<rect x="1334" y="649" width="65" height="36" fill="#808080"/>
<rect x="1335" y="650" width="64" height="35" fill="#d4d0c8"/>
<rect x="1335" y="650" width="63" height="34" fill="#404040"/>
<rect x="1336" y="651" width="62" height="33" fill="#fff"/>
<rect x="1368" y="651" width="30" height="17" fill="#404040"/>
<rect x="1368" y="651" width="29" height="16" fill="#ffffff"/>
<rect x="1369" y="652" width="28" height="15" fill="#808080"/>
<rect x="1369" y="652" width="27" height="14" fill="#d4d0c8"/>
<path d="M1378.5 662.0h8l-4-4z" fill="#000"/>
<rect x="1368" y="668" width="30" height="16" fill="#404040"/>
<rect x="1368" y="668" width="29" height="15" fill="#ffffff"/>
<rect x="1369" y="669" width="28" height="14" fill="#808080"/>
<rect x="1369" y="669" width="27" height="13" fill="#d4d0c8"/>
<path d="M1378.5 674.0h8l-4 4z" fill="#000"/>
<text x="1339" y="670.5" font-family="Liberation Sans" font-size="18" fill="#000" textLength="7.4" lengthAdjust="spacingAndGlyphs" xml:space="preserve">1</text>
<rect x="657" y="692" width="95" height="37" fill="#ffffff"/>
<rect x="657" y="692" width="94" height="36" fill="#808080"/>
<rect x="658" y="693" width="93" height="35" fill="#d4d0c8"/>
<rect x="658" y="693" width="92" height="34" fill="#404040"/>
<rect x="659" y="694" width="91" height="33" fill="#fff"/>
<text x="673.5" y="713.5" font-family="Liberation Sans" font-size="18" fill="#000" textLength="16.0" lengthAdjust="spacingAndGlyphs" xml:space="preserve">37</text>
<rect x="763" y="692" width="80" height="37" fill="#000"/>
<rect x="764" y="693" width="78" height="35" fill="#404040"/>
<rect x="764" y="693" width="77" height="34" fill="#ffffff"/>
<rect x="765" y="694" width="76" height="33" fill="#d4d0c8"/>
<rect x="770" y="699" width="40" height="24" fill="#000"/>
<rect x="771" y="700" width="38" height="22" fill="#003366"/>
<path d="M825 712h7l-3.5 6z" fill="#000"/>
<rect x="859" y="692" width="66" height="37" fill="#ffffff"/>
<rect x="859" y="692" width="65" height="36" fill="#808080"/>
<rect x="860" y="693" width="64" height="35" fill="#d4d0c8"/>
<rect x="860" y="693" width="63" height="34" fill="#404040"/>
<rect x="861" y="694" width="62" height="33" fill="#fff"/>
<rect x="893" y="694" width="30" height="17" fill="#404040"/>
<rect x="893" y="694" width="29" height="16" fill="#ffffff"/>
<rect x="894" y="695" width="28" height="15" fill="#808080"/>
<rect x="894" y="695" width="27" height="14" fill="#d4d0c8"/>
<path d="M903.5 705.0h8l-4-4z" fill="#000"/>
<rect x="893" y="711" width="30" height="16" fill="#404040"/>
<rect x="893" y="711" width="29" height="15" fill="#ffffff"/>
<rect x="894" y="712" width="28" height="14" fill="#808080"/>
<rect x="894" y="712" width="27" height="13" fill="#d4d0c8"/>
<path d="M903.5 717.0h8l-4 4z" fill="#000"/>
<text x="864" y="713.5" font-family="Liberation Sans" font-size="18" fill="#000" textLength="7.4" lengthAdjust="spacingAndGlyphs" xml:space="preserve">3</text>
<rect x="942" y="692" width="66" height="37" fill="#ffffff"/>
<rect x="942" y="692" width="65" height="36" fill="#808080"/>
<rect x="943" y="693" width="64" height="35" fill="#d4d0c8"/>
<rect x="943" y="693" width="63" height="34" fill="#404040"/>
<rect x="944" y="694" width="62" height="33" fill="#fff"/>
<rect x="976" y="694" width="30" height="17" fill="#404040"/>
<rect x="976" y="694" width="29" height="16" fill="#ffffff"/>
<rect x="977" y="695" width="28" height="15" fill="#808080"/>
<rect x="977" y="695" width="27" height="14" fill="#d4d0c8"/>
<path d="M986.5 705.0h8l-4-4z" fill="#000"/>
<rect x="976" y="711" width="30" height="16" fill="#404040"/>
<rect x="976" y="711" width="29" height="15" fill="#ffffff"/>
<rect x="977" y="712" width="28" height="14" fill="#808080"/>
<rect x="977" y="712" width="27" height="13" fill="#d4d0c8"/>
<path d="M986.5 717.0h8l-4 4z" fill="#000"/>
<text x="947" y="713.5" font-family="Liberation Sans" font-size="18" fill="#000" textLength="7.4" lengthAdjust="spacingAndGlyphs" xml:space="preserve">1</text>
<rect x="1048" y="692" width="95" height="37" fill="#ffffff"/>
<rect x="1048" y="692" width="94" height="36" fill="#808080"/>
<rect x="1049" y="693" width="93" height="35" fill="#d4d0c8"/>
<rect x="1049" y="693" width="92" height="34" fill="#404040"/>
<rect x="1050" y="694" width="91" height="33" fill="#fff"/>
<text x="1069" y="713.5" font-family="Liberation Sans" font-size="18" fill="#000" textLength="7.4" lengthAdjust="spacingAndGlyphs" xml:space="preserve">0</text>
<rect x="1155" y="692" width="80" height="37" fill="#000"/>
<rect x="1156" y="693" width="78" height="35" fill="#404040"/>
<rect x="1156" y="693" width="77" height="34" fill="#ffffff"/>
<rect x="1157" y="694" width="76" height="33" fill="#d4d0c8"/>
<rect x="1162" y="699" width="40" height="24" fill="#000"/>
<rect x="1163" y="700" width="38" height="22" fill="#000"/>
<path d="M1217 712h7l-3.5 6z" fill="#000"/>
<rect x="1251" y="692" width="66" height="37" fill="#ffffff"/>
<rect x="1251" y="692" width="65" height="36" fill="#808080"/>
<rect x="1252" y="693" width="64" height="35" fill="#d4d0c8"/>
<rect x="1252" y="693" width="63" height="34" fill="#404040"/>
<rect x="1253" y="694" width="62" height="33" fill="#fff"/>
<rect x="1285" y="694" width="30" height="17" fill="#404040"/>
<rect x="1285" y="694" width="29" height="16" fill="#ffffff"/>
<rect x="1286" y="695" width="28" height="15" fill="#808080"/>
<rect x="1286" y="695" width="27" height="14" fill="#d4d0c8"/>
<path d="M1295.5 705.0h8l-4-4z" fill="#000"/>
<rect x="1285" y="711" width="30" height="16" fill="#404040"/>
<rect x="1285" y="711" width="29" height="15" fill="#ffffff"/>
<rect x="1286" y="712" width="28" height="14" fill="#808080"/>
<rect x="1286" y="712" width="27" height="13" fill="#d4d0c8"/>
<path d="M1295.5 717.0h8l-4 4z" fill="#000"/>
<text x="1256" y="713.5" font-family="Liberation Sans" font-size="18" fill="#000" textLength="7.4" lengthAdjust="spacingAndGlyphs" xml:space="preserve">2</text>
<rect x="1334" y="692" width="66" height="37" fill="#ffffff"/>
<rect x="1334" y="692" width="65" height="36" fill="#808080"/>
<rect x="1335" y="693" width="64" height="35" fill="#d4d0c8"/>
<rect x="1335" y="693" width="63" height="34" fill="#404040"/>
<rect x="1336" y="694" width="62" height="33" fill="#fff"/>
<rect x="1368" y="694" width="30" height="17" fill="#404040"/>
<rect x="1368" y="694" width="29" height="16" fill="#ffffff"/>
<rect x="1369" y="695" width="28" height="15" fill="#808080"/>
<rect x="1369" y="695" width="27" height="14" fill="#d4d0c8"/>
<path d="M1378.5 705.0h8l-4-4z" fill="#000"/>
<rect x="1368" y="711" width="30" height="16" fill="#404040"/>
<rect x="1368" y="711" width="29" height="15" fill="#ffffff"/>
<rect x="1369" y="712" width="28" height="14" fill="#808080"/>
<rect x="1369" y="712" width="27" height="13" fill="#d4d0c8"/>
<path d="M1378.5 717.0h8l-4 4z" fill="#000"/>
<text x="1339" y="713.5" font-family="Liberation Sans" font-size="18" fill="#000" textLength="7.4" lengthAdjust="spacingAndGlyphs" xml:space="preserve">1</text>
<rect x="657" y="736" width="95" height="37" fill="#ffffff"/>
<rect x="657" y="736" width="94" height="36" fill="#808080"/>
<rect x="658" y="737" width="93" height="35" fill="#d4d0c8"/>
<rect x="658" y="737" width="92" height="34" fill="#404040"/>
<rect x="659" y="738" width="91" height="33" fill="#fff"/>
<text x="668.8" y="757.5" font-family="Liberation Sans" font-size="18" fill="#000" textLength="24.6" lengthAdjust="spacingAndGlyphs" xml:space="preserve">115</text>
<rect x="763" y="736" width="80" height="37" fill="#000"/>
<rect x="764" y="737" width="78" height="35" fill="#404040"/>
<rect x="764" y="737" width="77" height="34" fill="#ffffff"/>
<rect x="765" y="738" width="76" height="33" fill="#d4d0c8"/>
<rect x="770" y="743" width="40" height="24" fill="#000"/>
<rect x="771" y="744" width="38" height="22" fill="#330000"/>
<path d="M825 756h7l-3.5 6z" fill="#000"/>
<rect x="859" y="736" width="66" height="37" fill="#ffffff"/>
<rect x="859" y="736" width="65" height="36" fill="#808080"/>
<rect x="860" y="737" width="64" height="35" fill="#d4d0c8"/>
<rect x="860" y="737" width="63" height="34" fill="#404040"/>
<rect x="861" y="738" width="62" height="33" fill="#fff"/>
<rect x="893" y="738" width="30" height="17" fill="#404040"/>
<rect x="893" y="738" width="29" height="16" fill="#ffffff"/>
<rect x="894" y="739" width="28" height="15" fill="#808080"/>
<rect x="894" y="739" width="27" height="14" fill="#d4d0c8"/>
<path d="M903.5 749.0h8l-4-4z" fill="#000"/>
<rect x="893" y="755" width="30" height="16" fill="#404040"/>
<rect x="893" y="755" width="29" height="15" fill="#ffffff"/>
<rect x="894" y="756" width="28" height="14" fill="#808080"/>
<rect x="894" y="756" width="27" height="13" fill="#d4d0c8"/>
<path d="M903.5 761.0h8l-4 4z" fill="#000"/>
<text x="864" y="757.5" font-family="Liberation Sans" font-size="18" fill="#000" textLength="7.4" lengthAdjust="spacingAndGlyphs" xml:space="preserve">3</text>
<rect x="942" y="736" width="66" height="37" fill="#ffffff"/>
<rect x="942" y="736" width="65" height="36" fill="#808080"/>
<rect x="943" y="737" width="64" height="35" fill="#d4d0c8"/>
<rect x="943" y="737" width="63" height="34" fill="#404040"/>
<rect x="944" y="738" width="62" height="33" fill="#fff"/>
<rect x="976" y="738" width="30" height="17" fill="#404040"/>
<rect x="976" y="738" width="29" height="16" fill="#ffffff"/>
<rect x="977" y="739" width="28" height="15" fill="#808080"/>
<rect x="977" y="739" width="27" height="14" fill="#d4d0c8"/>
<path d="M986.5 749.0h8l-4-4z" fill="#000"/>
<rect x="976" y="755" width="30" height="16" fill="#404040"/>
<rect x="976" y="755" width="29" height="15" fill="#ffffff"/>
<rect x="977" y="756" width="28" height="14" fill="#808080"/>
<rect x="977" y="756" width="27" height="13" fill="#d4d0c8"/>
<path d="M986.5 761.0h8l-4 4z" fill="#000"/>
<text x="947" y="757.5" font-family="Liberation Sans" font-size="18" fill="#000" textLength="7.4" lengthAdjust="spacingAndGlyphs" xml:space="preserve">2</text>
<rect x="1048" y="736" width="95" height="37" fill="#ffffff"/>
<rect x="1048" y="736" width="94" height="36" fill="#808080"/>
<rect x="1049" y="737" width="93" height="35" fill="#d4d0c8"/>
<rect x="1049" y="737" width="92" height="34" fill="#404040"/>
<rect x="1050" y="738" width="91" height="33" fill="#fff"/>
<text x="1069" y="757.5" font-family="Liberation Sans" font-size="18" fill="#000" textLength="7.4" lengthAdjust="spacingAndGlyphs" xml:space="preserve">0</text>
<rect x="1155" y="736" width="80" height="37" fill="#000"/>
<rect x="1156" y="737" width="78" height="35" fill="#404040"/>
<rect x="1156" y="737" width="77" height="34" fill="#ffffff"/>
<rect x="1157" y="738" width="76" height="33" fill="#d4d0c8"/>
<rect x="1162" y="743" width="40" height="24" fill="#000"/>
<rect x="1163" y="744" width="38" height="22" fill="#000"/>
<path d="M1217 756h7l-3.5 6z" fill="#000"/>
<rect x="1251" y="736" width="66" height="37" fill="#ffffff"/>
<rect x="1251" y="736" width="65" height="36" fill="#808080"/>
<rect x="1252" y="737" width="64" height="35" fill="#d4d0c8"/>
<rect x="1252" y="737" width="63" height="34" fill="#404040"/>
<rect x="1253" y="738" width="62" height="33" fill="#fff"/>
<rect x="1285" y="738" width="30" height="17" fill="#404040"/>
<rect x="1285" y="738" width="29" height="16" fill="#ffffff"/>
<rect x="1286" y="739" width="28" height="15" fill="#808080"/>
<rect x="1286" y="739" width="27" height="14" fill="#d4d0c8"/>
<path d="M1295.5 749.0h8l-4-4z" fill="#000"/>
<rect x="1285" y="755" width="30" height="16" fill="#404040"/>
<rect x="1285" y="755" width="29" height="15" fill="#ffffff"/>
<rect x="1286" y="756" width="28" height="14" fill="#808080"/>
<rect x="1286" y="756" width="27" height="13" fill="#d4d0c8"/>
<path d="M1295.5 761.0h8l-4 4z" fill="#000"/>
<text x="1256" y="757.5" font-family="Liberation Sans" font-size="18" fill="#000" textLength="7.4" lengthAdjust="spacingAndGlyphs" xml:space="preserve">2</text>
<rect x="1334" y="736" width="66" height="37" fill="#ffffff"/>
<rect x="1334" y="736" width="65" height="36" fill="#808080"/>
<rect x="1335" y="737" width="64" height="35" fill="#d4d0c8"/>
<rect x="1335" y="737" width="63" height="34" fill="#404040"/>
<rect x="1336" y="738" width="62" height="33" fill="#fff"/>
<rect x="1368" y="738" width="30" height="17" fill="#404040"/>
<rect x="1368" y="738" width="29" height="16" fill="#ffffff"/>
<rect x="1369" y="739" width="28" height="15" fill="#808080"/>
<rect x="1369" y="739" width="27" height="14" fill="#d4d0c8"/>
<path d="M1378.5 749.0h8l-4-4z" fill="#000"/>
<rect x="1368" y="755" width="30" height="16" fill="#404040"/>
<rect x="1368" y="755" width="29" height="15" fill="#ffffff"/>
<rect x="1369" y="756" width="28" height="14" fill="#808080"/>
<rect x="1369" y="756" width="27" height="13" fill="#d4d0c8"/>
<path d="M1378.5 761.0h8l-4 4z" fill="#000"/>
<text x="1339" y="757.5" font-family="Liberation Sans" font-size="18" fill="#000" textLength="7.4" lengthAdjust="spacingAndGlyphs" xml:space="preserve">1</text>
<rect x="678" y="790" width="235" height="38" fill="#404040"/>
<rect x="678" y="790" width="234" height="37" fill="#ffffff"/>
<rect x="679" y="791" width="233" height="36" fill="#808080"/>
<rect x="679" y="791" width="232" height="35" fill="#d4d0c8"/>
<text x="698.75" y="814.5" font-family="Liberation Sans" font-size="18" fill="#000" textLength="193" lengthAdjust="spacingAndGlyphs" xml:space="preserve">Начальные установки</text>
<rect x="1003" y="858" width="133" height="38" fill="#000"/>
<rect x="1004" y="859" width="131" height="36" fill="#404040"/>
<rect x="1004" y="859" width="130" height="35" fill="#ffffff"/>
<rect x="1005" y="860" width="129" height="34" fill="#808080"/>
<rect x="1005" y="860" width="128" height="33" fill="#d4d0c8"/>
<text x="1058.4" y="883" font-family="Liberation Sans" font-size="18" fill="#000" textLength="23.8" lengthAdjust="spacingAndGlyphs" xml:space="preserve">OK</text>
<rect x="1147" y="858" width="133" height="38" fill="#404040"/>
<rect x="1147" y="858" width="132" height="37" fill="#ffffff"/>
<rect x="1148" y="859" width="131" height="36" fill="#808080"/>
<rect x="1148" y="859" width="130" height="35" fill="#d4d0c8"/>
<text x="1181" y="883" font-family="Liberation Sans" font-size="18" fill="#000" textLength="66" lengthAdjust="spacingAndGlyphs" xml:space="preserve">Отмена</text>
<rect x="1291" y="858" width="133" height="38" fill="#404040"/>
<rect x="1291" y="858" width="132" height="37" fill="#ffffff"/>
<rect x="1292" y="859" width="131" height="36" fill="#808080"/>
<rect x="1292" y="859" width="130" height="35" fill="#d4d0c8"/>
<text x="1309.8" y="884" font-family="Liberation Sans" font-size="18" fill="#ffffff" textLength="95" lengthAdjust="spacingAndGlyphs" xml:space="preserve">Применить</text>
<text x="1308.8" y="883" font-family="Liberation Sans" font-size="18" fill="#808080" textLength="95" lengthAdjust="spacingAndGlyphs" xml:space="preserve">Применить</text>
<path d="M634 116L222 210" stroke="#a0672a" stroke-width="6.5"/>
<path d="M187.5 217.8L221 196.6L227.6 223.7Z" fill="#a0672a"/>
<path d="M890 174L962 229" stroke="#a0672a" stroke-width="6.5"/>
<path d="M991.5 251.4L970.3 218L953 239Z" fill="#a0672a"/>
</svg>
</body></html>
